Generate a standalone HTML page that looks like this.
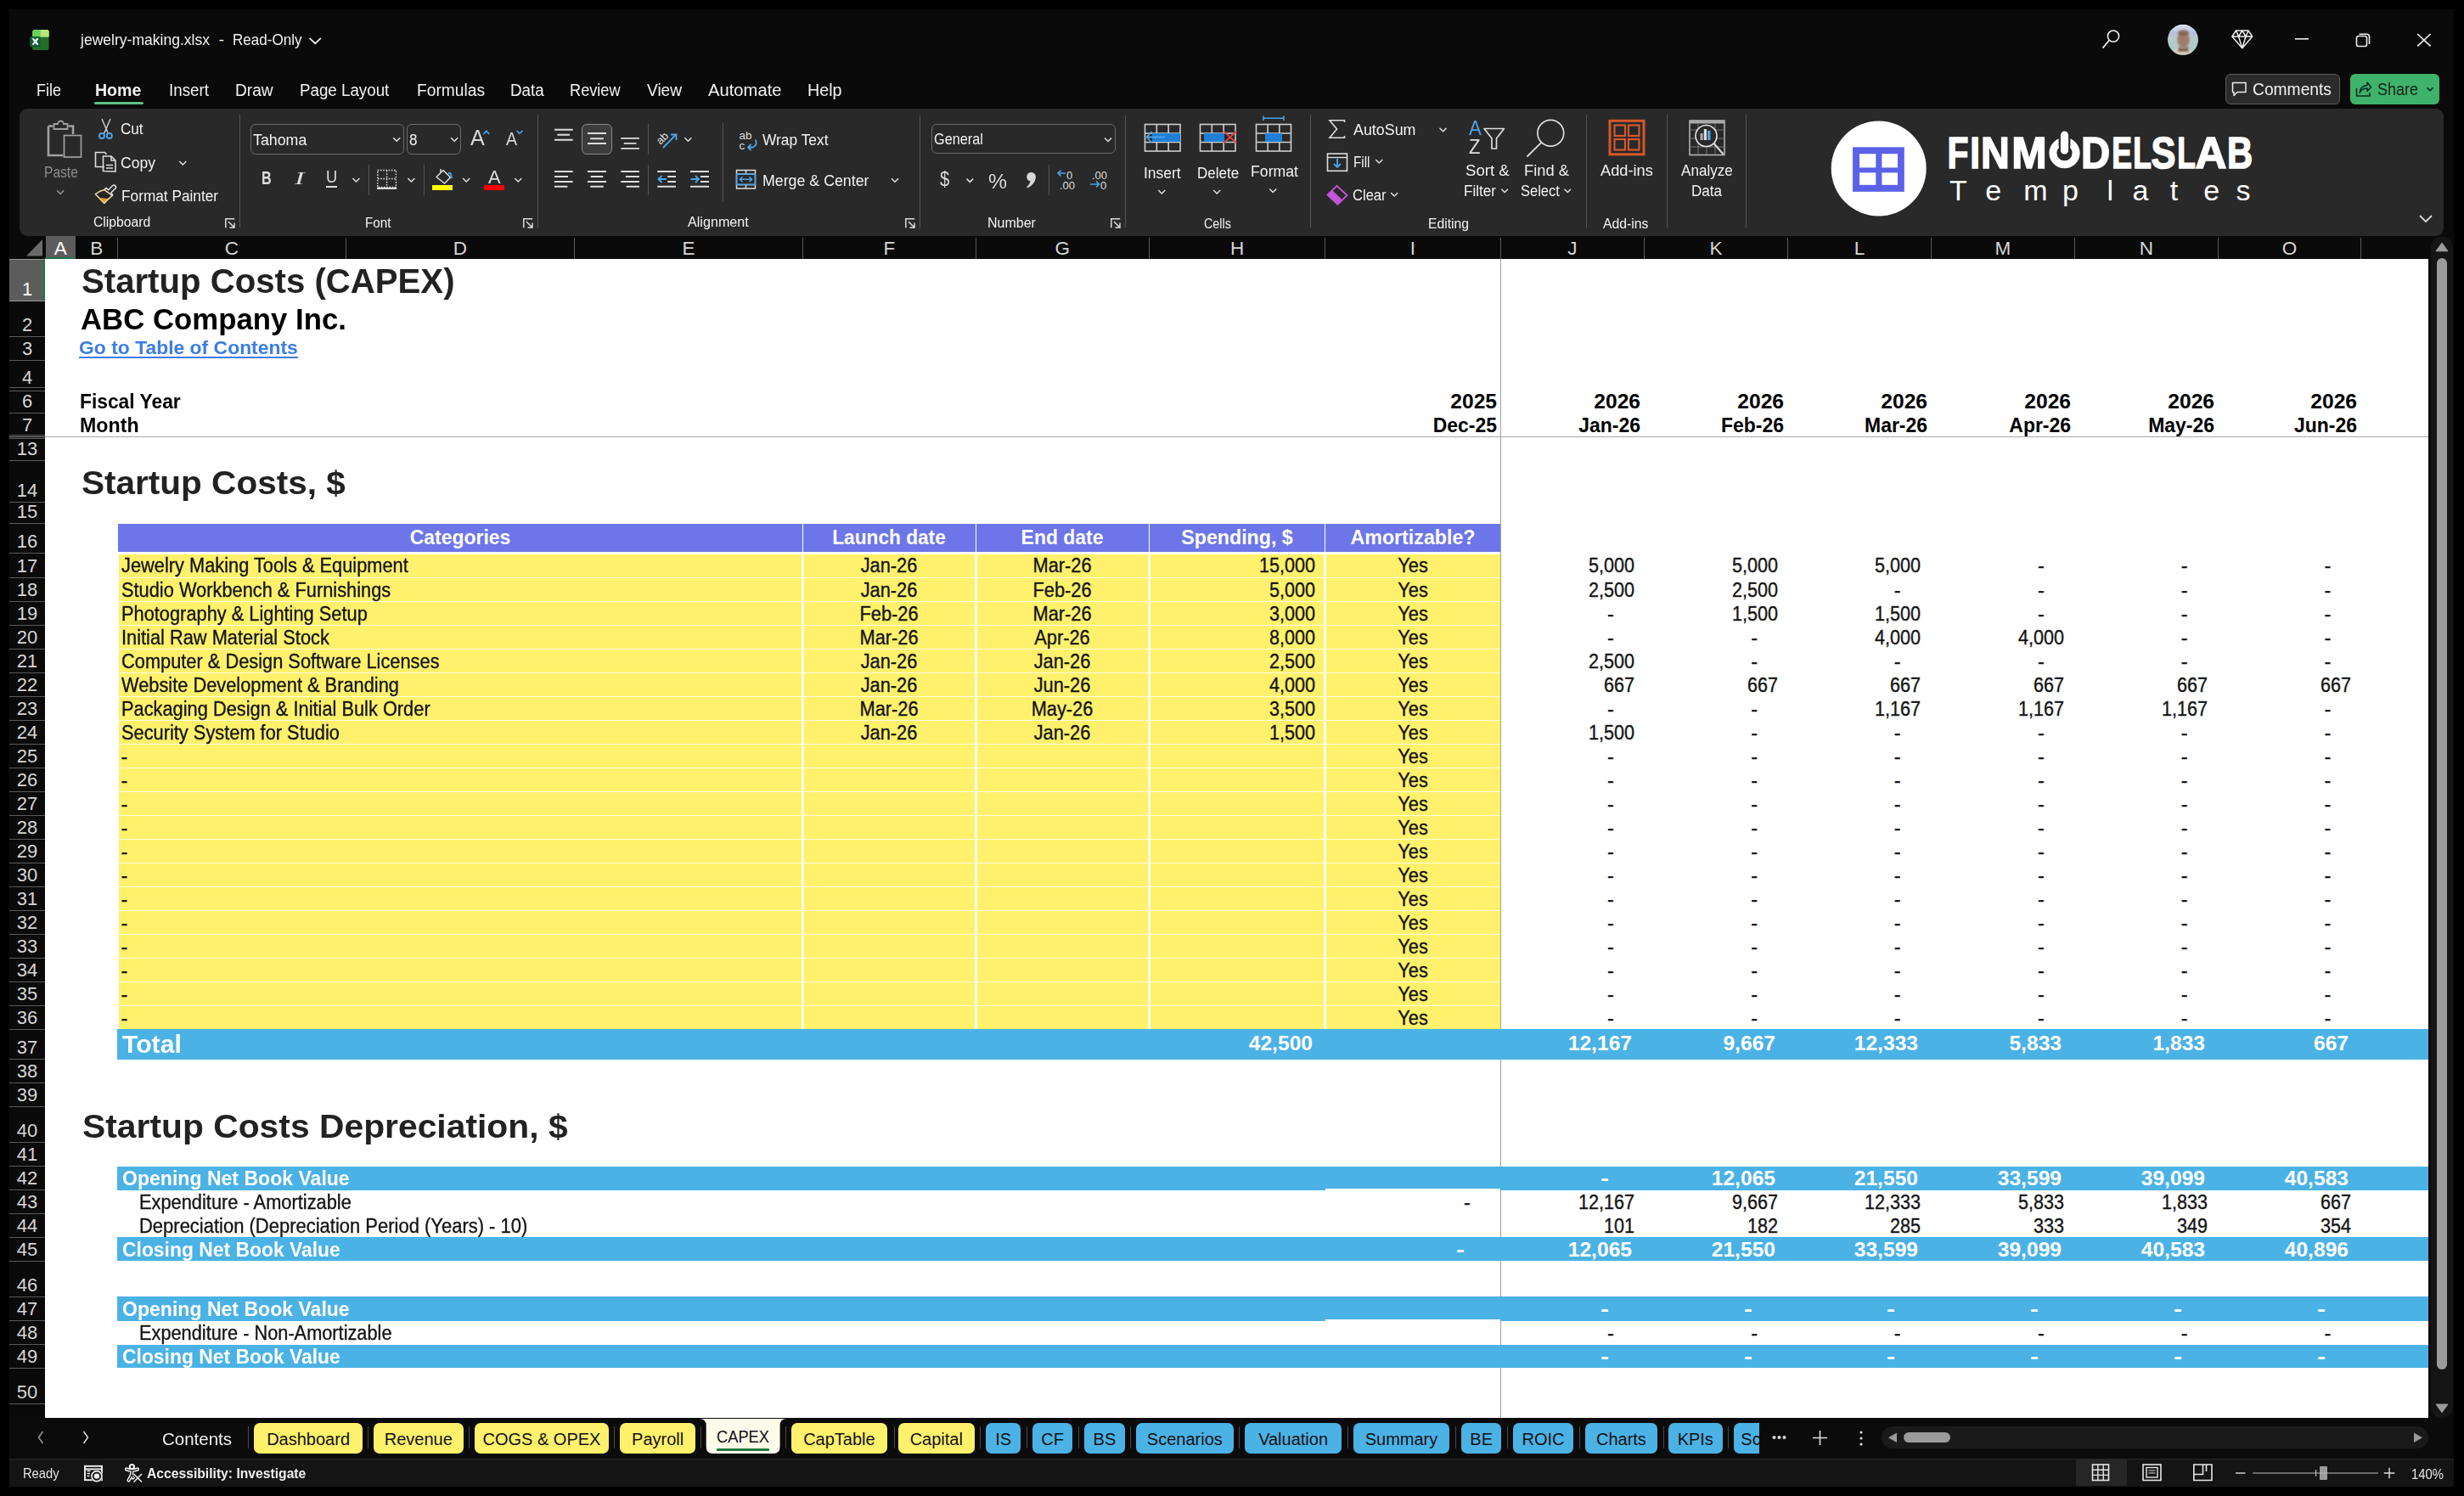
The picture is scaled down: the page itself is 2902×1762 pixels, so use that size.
<!DOCTYPE html><html><head><meta charset="utf-8"><style>
html,body{margin:0;padding:0}
body{width:2902px;height:1762px;background:#000;position:relative;overflow:hidden;font-family:'Liberation Sans',sans-serif}
.a{position:absolute}
.t{position:absolute;white-space:nowrap;line-height:1.117}
.sb{-webkit-text-stroke:0.35px #141414}
svg{position:absolute;overflow:visible}
</style></head><body>
<div class="a" style="left:11px;top:11px;width:2879px;height:1739px;background:#0a0a0a;"></div>
<div class="a" style="left:23px;top:128px;width:2855px;height:150px;background:#292929;border-radius:9px;"></div>
<div class="a" style="left:11px;top:278px;width:2849px;height:27px;background:#0a0a0a;"></div>
<div class="a" style="left:53px;top:305px;width:2807px;height:1365px;background:#fff;"></div>
<div class="a" style="left:11px;top:305px;width:42px;height:1365px;background:#0a0a0a;"></div>
<div class="a" style="left:2863px;top:279px;width:26px;height:1391px;background:#151515;border-radius:12px;"></div>
<div class="a" style="left:11px;top:1670px;width:2879px;height:48px;background:#0b0b0b;"></div>
<div class="a" style="left:11px;top:1718px;width:2879px;height:1px;background:#262626;"></div>
<div class="a" style="left:11px;top:1719px;width:2879px;height:32px;background:#141414;"></div>
<div class="a" style="left:53.5px;top:278px;width:35.5px;height:27px;background:#5c5c5c;"></div>
<div class="a" style="left:53px;top:303px;width:36px;height:2px;background:#1e7145;"></div>
<svg style="left:0;top:0" width="2902" height="1762"><polygon points="31,301.5 50,282 50,301.5" fill="#6a6a6a"/></svg>
<div class="a" style="left:88px;top:280px;width:1px;height:25px;background:#5a5a5a;"></div>
<div class="a" style="left:138px;top:280px;width:1px;height:25px;background:#5a5a5a;"></div>
<div class="a" style="left:407px;top:280px;width:1px;height:25px;background:#5a5a5a;"></div>
<div class="a" style="left:676px;top:280px;width:1px;height:25px;background:#5a5a5a;"></div>
<div class="a" style="left:945px;top:280px;width:1px;height:25px;background:#5a5a5a;"></div>
<div class="a" style="left:1149px;top:280px;width:1px;height:25px;background:#5a5a5a;"></div>
<div class="a" style="left:1353px;top:280px;width:1px;height:25px;background:#5a5a5a;"></div>
<div class="a" style="left:1560px;top:280px;width:1px;height:25px;background:#5a5a5a;"></div>
<div class="a" style="left:1767px;top:280px;width:1px;height:25px;background:#5a5a5a;"></div>
<div class="a" style="left:1936px;top:280px;width:1px;height:25px;background:#5a5a5a;"></div>
<div class="a" style="left:2105px;top:280px;width:1px;height:25px;background:#5a5a5a;"></div>
<div class="a" style="left:2274px;top:280px;width:1px;height:25px;background:#5a5a5a;"></div>
<div class="a" style="left:2443px;top:280px;width:1px;height:25px;background:#5a5a5a;"></div>
<div class="a" style="left:2612px;top:280px;width:1px;height:25px;background:#5a5a5a;"></div>
<div class="a" style="left:2780px;top:280px;width:1px;height:25px;background:#5a5a5a;"></div>
<div class="t" style="left:71.25px;top:279.8px;font-size:22.5px;font-weight:400;color:#ffffff;transform:translateX(-50%) scaleX(1.0);transform-origin:50% 0;">A</div>
<div class="t" style="left:113.75px;top:279.8px;font-size:22.5px;font-weight:400;color:#d6d6d6;transform:translateX(-50%) scaleX(1.0);transform-origin:50% 0;">B</div>
<div class="t" style="left:272.9px;top:279.8px;font-size:22.5px;font-weight:400;color:#d6d6d6;transform:translateX(-50%) scaleX(1.0);transform-origin:50% 0;">C</div>
<div class="t" style="left:541.9px;top:279.8px;font-size:22.5px;font-weight:400;color:#d6d6d6;transform:translateX(-50%) scaleX(1.0);transform-origin:50% 0;">D</div>
<div class="t" style="left:811.0px;top:279.8px;font-size:22.5px;font-weight:400;color:#d6d6d6;transform:translateX(-50%) scaleX(1.0);transform-origin:50% 0;">E</div>
<div class="t" style="left:1047.35px;top:279.8px;font-size:22.5px;font-weight:400;color:#d6d6d6;transform:translateX(-50%) scaleX(1.0);transform-origin:50% 0;">F</div>
<div class="t" style="left:1251.35px;top:279.8px;font-size:22.5px;font-weight:400;color:#d6d6d6;transform:translateX(-50%) scaleX(1.0);transform-origin:50% 0;">G</div>
<div class="t" style="left:1457.0px;top:279.8px;font-size:22.5px;font-weight:400;color:#d6d6d6;transform:translateX(-50%) scaleX(1.0);transform-origin:50% 0;">H</div>
<div class="t" style="left:1663.9px;top:279.8px;font-size:22.5px;font-weight:400;color:#d6d6d6;transform:translateX(-50%) scaleX(1.0);transform-origin:50% 0;">I</div>
<div class="t" style="left:1851.9px;top:279.8px;font-size:22.5px;font-weight:400;color:#d6d6d6;transform:translateX(-50%) scaleX(1.0);transform-origin:50% 0;">J</div>
<div class="t" style="left:2021.1px;top:279.8px;font-size:22.5px;font-weight:400;color:#d6d6d6;transform:translateX(-50%) scaleX(1.0);transform-origin:50% 0;">K</div>
<div class="t" style="left:2189.95px;top:279.8px;font-size:22.5px;font-weight:400;color:#d6d6d6;transform:translateX(-50%) scaleX(1.0);transform-origin:50% 0;">L</div>
<div class="t" style="left:2358.8px;top:279.8px;font-size:22.5px;font-weight:400;color:#d6d6d6;transform:translateX(-50%) scaleX(1.0);transform-origin:50% 0;">M</div>
<div class="t" style="left:2527.8px;top:279.8px;font-size:22.5px;font-weight:400;color:#d6d6d6;transform:translateX(-50%) scaleX(1.0);transform-origin:50% 0;">N</div>
<div class="t" style="left:2696.5px;top:279.8px;font-size:22.5px;font-weight:400;color:#d6d6d6;transform:translateX(-50%) scaleX(1.0);transform-origin:50% 0;">O</div>
<div class="a" style="left:11px;top:305.3px;width:42px;height:49.7px;background:#5c5c5c;"></div>
<div class="a" style="left:51px;top:305px;width:2px;height:50px;background:#1e7145;"></div>
<div class="a" style="left:11px;top:354px;width:42px;height:1px;background:#9a9a9a;"></div>
<div class="t" style="left:32px;top:328.7px;font-size:22px;font-weight:400;color:#ffffff;transform:translateX(-50%) scaleX(1.0);transform-origin:50% 0;">1</div>
<div class="a" style="left:11px;top:396px;width:42px;height:1px;background:#5a5a5a;"></div>
<div class="t" style="left:32px;top:370.7px;font-size:22px;font-weight:400;color:#d6d6d6;transform:translateX(-50%) scaleX(1.0);transform-origin:50% 0;">2</div>
<div class="a" style="left:11px;top:424px;width:42px;height:1px;background:#5a5a5a;"></div>
<div class="t" style="left:32px;top:399.1px;font-size:22px;font-weight:400;color:#d6d6d6;transform:translateX(-50%) scaleX(1.0);transform-origin:50% 0;">3</div>
<div class="a" style="left:11px;top:456px;width:42px;height:1px;background:#5a5a5a;"></div>
<div class="t" style="left:32px;top:432.8px;font-size:22px;font-weight:400;color:#d6d6d6;transform:translateX(-50%) scaleX(1.0);transform-origin:50% 0;">4</div>
<div class="a" style="left:11px;top:486px;width:42px;height:1px;background:#5a5a5a;"></div>
<div class="t" style="left:32px;top:460.7px;font-size:22px;font-weight:400;color:#d6d6d6;transform:translateX(-50%) scaleX(1.0);transform-origin:50% 0;">6</div>
<div class="a" style="left:11px;top:512px;width:42px;height:1px;background:#5a5a5a;"></div>
<div class="t" style="left:32px;top:488.9px;font-size:22px;font-weight:400;color:#d6d6d6;transform:translateX(-50%) scaleX(1.0);transform-origin:50% 0;">7</div>
<div class="a" style="left:11px;top:542px;width:42px;height:1px;background:#5a5a5a;"></div>
<div class="t" style="left:32px;top:517.3px;font-size:22px;font-weight:400;color:#d6d6d6;transform:translateX(-50%) scaleX(1.0);transform-origin:50% 0;">13</div>
<div class="a" style="left:11px;top:591px;width:42px;height:1px;background:#5a5a5a;"></div>
<div class="t" style="left:32px;top:565.9px;font-size:22px;font-weight:400;color:#d6d6d6;transform:translateX(-50%) scaleX(1.0);transform-origin:50% 0;">14</div>
<div class="a" style="left:11px;top:616px;width:42px;height:1px;background:#5a5a5a;"></div>
<div class="t" style="left:32px;top:591.2px;font-size:22px;font-weight:400;color:#d6d6d6;transform:translateX(-50%) scaleX(1.0);transform-origin:50% 0;">15</div>
<div class="a" style="left:11px;top:651px;width:42px;height:1px;background:#5a5a5a;"></div>
<div class="t" style="left:32px;top:626.2px;font-size:22px;font-weight:400;color:#d6d6d6;transform:translateX(-50%) scaleX(1.0);transform-origin:50% 0;">16</div>
<div class="a" style="left:11px;top:680px;width:42px;height:1px;background:#5a5a5a;"></div>
<div class="t" style="left:32px;top:655.1px;font-size:22px;font-weight:400;color:#d6d6d6;transform:translateX(-50%) scaleX(1.0);transform-origin:50% 0;">17</div>
<div class="a" style="left:11px;top:708px;width:42px;height:1px;background:#5a5a5a;"></div>
<div class="t" style="left:32px;top:683.1px;font-size:22px;font-weight:400;color:#d6d6d6;transform:translateX(-50%) scaleX(1.0);transform-origin:50% 0;">18</div>
<div class="a" style="left:11px;top:736px;width:42px;height:1px;background:#5a5a5a;"></div>
<div class="t" style="left:32px;top:711.1px;font-size:22px;font-weight:400;color:#d6d6d6;transform:translateX(-50%) scaleX(1.0);transform-origin:50% 0;">19</div>
<div class="a" style="left:11px;top:764px;width:42px;height:1px;background:#5a5a5a;"></div>
<div class="t" style="left:32px;top:739.1px;font-size:22px;font-weight:400;color:#d6d6d6;transform:translateX(-50%) scaleX(1.0);transform-origin:50% 0;">20</div>
<div class="a" style="left:11px;top:792px;width:42px;height:1px;background:#5a5a5a;"></div>
<div class="t" style="left:32px;top:767.1px;font-size:22px;font-weight:400;color:#d6d6d6;transform:translateX(-50%) scaleX(1.0);transform-origin:50% 0;">21</div>
<div class="a" style="left:11px;top:820px;width:42px;height:1px;background:#5a5a5a;"></div>
<div class="t" style="left:32px;top:795.1px;font-size:22px;font-weight:400;color:#d6d6d6;transform:translateX(-50%) scaleX(1.0);transform-origin:50% 0;">22</div>
<div class="a" style="left:11px;top:848px;width:42px;height:1px;background:#5a5a5a;"></div>
<div class="t" style="left:32px;top:823.1px;font-size:22px;font-weight:400;color:#d6d6d6;transform:translateX(-50%) scaleX(1.0);transform-origin:50% 0;">23</div>
<div class="a" style="left:11px;top:876px;width:42px;height:1px;background:#5a5a5a;"></div>
<div class="t" style="left:32px;top:851.0px;font-size:22px;font-weight:400;color:#d6d6d6;transform:translateX(-50%) scaleX(1.0);transform-origin:50% 0;">24</div>
<div class="a" style="left:11px;top:904px;width:42px;height:1px;background:#5a5a5a;"></div>
<div class="t" style="left:32px;top:879.0px;font-size:22px;font-weight:400;color:#d6d6d6;transform:translateX(-50%) scaleX(1.0);transform-origin:50% 0;">25</div>
<div class="a" style="left:11px;top:932px;width:42px;height:1px;background:#5a5a5a;"></div>
<div class="t" style="left:32px;top:907.0px;font-size:22px;font-weight:400;color:#d6d6d6;transform:translateX(-50%) scaleX(1.0);transform-origin:50% 0;">26</div>
<div class="a" style="left:11px;top:960px;width:42px;height:1px;background:#5a5a5a;"></div>
<div class="t" style="left:32px;top:935.0px;font-size:22px;font-weight:400;color:#d6d6d6;transform:translateX(-50%) scaleX(1.0);transform-origin:50% 0;">27</div>
<div class="a" style="left:11px;top:988px;width:42px;height:1px;background:#5a5a5a;"></div>
<div class="t" style="left:32px;top:963.0px;font-size:22px;font-weight:400;color:#d6d6d6;transform:translateX(-50%) scaleX(1.0);transform-origin:50% 0;">28</div>
<div class="a" style="left:11px;top:1016px;width:42px;height:1px;background:#5a5a5a;"></div>
<div class="t" style="left:32px;top:991.0px;font-size:22px;font-weight:400;color:#d6d6d6;transform:translateX(-50%) scaleX(1.0);transform-origin:50% 0;">29</div>
<div class="a" style="left:11px;top:1044px;width:42px;height:1px;background:#5a5a5a;"></div>
<div class="t" style="left:32px;top:1019.0px;font-size:22px;font-weight:400;color:#d6d6d6;transform:translateX(-50%) scaleX(1.0);transform-origin:50% 0;">30</div>
<div class="a" style="left:11px;top:1072px;width:42px;height:1px;background:#5a5a5a;"></div>
<div class="t" style="left:32px;top:1047.0px;font-size:22px;font-weight:400;color:#d6d6d6;transform:translateX(-50%) scaleX(1.0);transform-origin:50% 0;">31</div>
<div class="a" style="left:11px;top:1100px;width:42px;height:1px;background:#5a5a5a;"></div>
<div class="t" style="left:32px;top:1075.0px;font-size:22px;font-weight:400;color:#d6d6d6;transform:translateX(-50%) scaleX(1.0);transform-origin:50% 0;">32</div>
<div class="a" style="left:11px;top:1128px;width:42px;height:1px;background:#5a5a5a;"></div>
<div class="t" style="left:32px;top:1103.0px;font-size:22px;font-weight:400;color:#d6d6d6;transform:translateX(-50%) scaleX(1.0);transform-origin:50% 0;">33</div>
<div class="a" style="left:11px;top:1156px;width:42px;height:1px;background:#5a5a5a;"></div>
<div class="t" style="left:32px;top:1131.0px;font-size:22px;font-weight:400;color:#d6d6d6;transform:translateX(-50%) scaleX(1.0);transform-origin:50% 0;">34</div>
<div class="a" style="left:11px;top:1184px;width:42px;height:1px;background:#5a5a5a;"></div>
<div class="t" style="left:32px;top:1159.0px;font-size:22px;font-weight:400;color:#d6d6d6;transform:translateX(-50%) scaleX(1.0);transform-origin:50% 0;">35</div>
<div class="a" style="left:11px;top:1212px;width:42px;height:1px;background:#5a5a5a;"></div>
<div class="t" style="left:32px;top:1187.0px;font-size:22px;font-weight:400;color:#d6d6d6;transform:translateX(-50%) scaleX(1.0);transform-origin:50% 0;">36</div>
<div class="a" style="left:11px;top:1247px;width:42px;height:1px;background:#5a5a5a;"></div>
<div class="t" style="left:32px;top:1221.9px;font-size:22px;font-weight:400;color:#d6d6d6;transform:translateX(-50%) scaleX(1.0);transform-origin:50% 0;">37</div>
<div class="a" style="left:11px;top:1275px;width:42px;height:1px;background:#5a5a5a;"></div>
<div class="t" style="left:32px;top:1249.8px;font-size:22px;font-weight:400;color:#d6d6d6;transform:translateX(-50%) scaleX(1.0);transform-origin:50% 0;">38</div>
<div class="a" style="left:11px;top:1303px;width:42px;height:1px;background:#5a5a5a;"></div>
<div class="t" style="left:32px;top:1277.9px;font-size:22px;font-weight:400;color:#d6d6d6;transform:translateX(-50%) scaleX(1.0);transform-origin:50% 0;">39</div>
<div class="a" style="left:11px;top:1345px;width:42px;height:1px;background:#5a5a5a;"></div>
<div class="t" style="left:32px;top:1319.9px;font-size:22px;font-weight:400;color:#d6d6d6;transform:translateX(-50%) scaleX(1.0);transform-origin:50% 0;">40</div>
<div class="a" style="left:11px;top:1373px;width:42px;height:1px;background:#5a5a5a;"></div>
<div class="t" style="left:32px;top:1348.4px;font-size:22px;font-weight:400;color:#d6d6d6;transform:translateX(-50%) scaleX(1.0);transform-origin:50% 0;">41</div>
<div class="a" style="left:11px;top:1401px;width:42px;height:1px;background:#5a5a5a;"></div>
<div class="t" style="left:32px;top:1376.3px;font-size:22px;font-weight:400;color:#d6d6d6;transform:translateX(-50%) scaleX(1.0);transform-origin:50% 0;">42</div>
<div class="a" style="left:11px;top:1429px;width:42px;height:1px;background:#5a5a5a;"></div>
<div class="t" style="left:32px;top:1404.2px;font-size:22px;font-weight:400;color:#d6d6d6;transform:translateX(-50%) scaleX(1.0);transform-origin:50% 0;">43</div>
<div class="a" style="left:11px;top:1457px;width:42px;height:1px;background:#5a5a5a;"></div>
<div class="t" style="left:32px;top:1432.1px;font-size:22px;font-weight:400;color:#d6d6d6;transform:translateX(-50%) scaleX(1.0);transform-origin:50% 0;">44</div>
<div class="a" style="left:11px;top:1485px;width:42px;height:1px;background:#5a5a5a;"></div>
<div class="t" style="left:32px;top:1460.1px;font-size:22px;font-weight:400;color:#d6d6d6;transform:translateX(-50%) scaleX(1.0);transform-origin:50% 0;">45</div>
<div class="a" style="left:11px;top:1527px;width:42px;height:1px;background:#5a5a5a;"></div>
<div class="t" style="left:32px;top:1501.9px;font-size:22px;font-weight:400;color:#d6d6d6;transform:translateX(-50%) scaleX(1.0);transform-origin:50% 0;">46</div>
<div class="a" style="left:11px;top:1555px;width:42px;height:1px;background:#5a5a5a;"></div>
<div class="t" style="left:32px;top:1530.3px;font-size:22px;font-weight:400;color:#d6d6d6;transform:translateX(-50%) scaleX(1.0);transform-origin:50% 0;">47</div>
<div class="a" style="left:11px;top:1583px;width:42px;height:1px;background:#5a5a5a;"></div>
<div class="t" style="left:32px;top:1558.3px;font-size:22px;font-weight:400;color:#d6d6d6;transform:translateX(-50%) scaleX(1.0);transform-origin:50% 0;">48</div>
<div class="a" style="left:11px;top:1611px;width:42px;height:1px;background:#5a5a5a;"></div>
<div class="t" style="left:32px;top:1586.2px;font-size:22px;font-weight:400;color:#d6d6d6;transform:translateX(-50%) scaleX(1.0);transform-origin:50% 0;">49</div>
<div class="a" style="left:11px;top:1653px;width:42px;height:1px;background:#5a5a5a;"></div>
<div class="t" style="left:32px;top:1628.1px;font-size:22px;font-weight:400;color:#d6d6d6;transform:translateX(-50%) scaleX(1.0);transform-origin:50% 0;">50</div>
<div class="a" style="left:11px;top:456px;width:42px;height:1px;background:#5a5a5a;"></div>
<div class="a" style="left:11px;top:460px;width:42px;height:1px;background:#5a5a5a;"></div>
<div class="a" style="left:11px;top:512px;width:42px;height:1px;background:#5a5a5a;"></div>
<div class="a" style="left:11px;top:514px;width:42px;height:1.3px;background:#8a8a8a;"></div>
<div class="a" style="left:11px;top:516px;width:42px;height:1px;background:#5a5a5a;"></div>
<div class="a" style="left:11px;top:1653px;width:42px;height:1px;background:#5a5a5a;"></div>
<div class="a" style="left:11px;top:304.5px;width:42px;height:1px;background:#9a9a9a;"></div>
<div class="a" style="left:53px;top:513.8px;width:2807px;height:1.4px;background:#a8a8a8;"></div>
<div class="a" style="left:1767px;top:305px;width:1.2px;height:1365px;background:#a0a0a0;"></div>
<div class="t" style="left:96px;top:308.9px;font-size:41px;font-weight:700;color:#222;transform:scaleX(0.9794);transform-origin:0 0;">Startup Costs (CAPEX)</div>
<div class="t" style="left:95px;top:357.3px;font-size:35.4px;font-weight:700;color:#000;transform:scaleX(0.9825);transform-origin:0 0;">ABC Company Inc.</div>
<div class="t" style="left:93px;top:398.1px;font-size:21.7px;font-weight:700;color:#3b7de6;transform:scaleX(1.056);transform-origin:0 0;">Go to Table of Contents</div>
<div class="a" style="left:93px;top:420.2px;width:258px;height:2px;background:#3b7de6;"></div>
<div class="t" style="left:93.75px;top:459.6px;font-size:24px;font-weight:700;color:#000;transform:scaleX(0.95);transform-origin:0 0;">Fiscal Year</div>
<div class="t" style="left:93.75px;top:487.6px;font-size:24px;font-weight:700;color:#000;transform:scaleX(0.9671);transform-origin:0 0;">Month</div>
<div class="t" style="left:1762.7px;top:459.8px;font-size:24px;font-weight:700;color:#000;transform:translateX(-100%) scaleX(1.025);transform-origin:100% 0;">2025</div>
<div class="t" style="left:1762.7px;top:487.6px;font-size:24px;font-weight:700;color:#000;transform:translateX(-100%) scaleX(0.956);transform-origin:100% 0;">Dec-25</div>
<div class="t" style="left:1931.9px;top:459.8px;font-size:24px;font-weight:700;color:#000;transform:translateX(-100%) scaleX(1.025);transform-origin:100% 0;">2026</div>
<div class="t" style="left:1931.9px;top:487.6px;font-size:24px;font-weight:700;color:#000;transform:translateX(-100%) scaleX(0.956);transform-origin:100% 0;">Jan-26</div>
<div class="t" style="left:2101.1px;top:459.8px;font-size:24px;font-weight:700;color:#000;transform:translateX(-100%) scaleX(1.025);transform-origin:100% 0;">2026</div>
<div class="t" style="left:2101.1px;top:487.6px;font-size:24px;font-weight:700;color:#000;transform:translateX(-100%) scaleX(0.956);transform-origin:100% 0;">Feb-26</div>
<div class="t" style="left:2269.6px;top:459.8px;font-size:24px;font-weight:700;color:#000;transform:translateX(-100%) scaleX(1.025);transform-origin:100% 0;">2026</div>
<div class="t" style="left:2269.6px;top:487.6px;font-size:24px;font-weight:700;color:#000;transform:translateX(-100%) scaleX(0.956);transform-origin:100% 0;">Mar-26</div>
<div class="t" style="left:2438.8px;top:459.8px;font-size:24px;font-weight:700;color:#000;transform:translateX(-100%) scaleX(1.025);transform-origin:100% 0;">2026</div>
<div class="t" style="left:2438.8px;top:487.6px;font-size:24px;font-weight:700;color:#000;transform:translateX(-100%) scaleX(0.956);transform-origin:100% 0;">Apr-26</div>
<div class="t" style="left:2607.6px;top:459.8px;font-size:24px;font-weight:700;color:#000;transform:translateX(-100%) scaleX(1.025);transform-origin:100% 0;">2026</div>
<div class="t" style="left:2607.6px;top:487.6px;font-size:24px;font-weight:700;color:#000;transform:translateX(-100%) scaleX(0.956);transform-origin:100% 0;">May-26</div>
<div class="t" style="left:2776.2000000000003px;top:459.8px;font-size:24px;font-weight:700;color:#000;transform:translateX(-100%) scaleX(1.025);transform-origin:100% 0;">2026</div>
<div class="t" style="left:2776.2000000000003px;top:487.6px;font-size:24px;font-weight:700;color:#000;transform:translateX(-100%) scaleX(0.956);transform-origin:100% 0;">Jun-26</div>
<div class="t" style="left:96px;top:545.8px;font-size:39.5px;font-weight:700;color:#222;transform:scaleX(1.0261);transform-origin:0 0;">Startup Costs, $</div>
<div class="a" style="left:138.5px;top:617px;width:1628.8px;height:33px;background:#6d76e8;"></div>
<div class="a" style="left:944.8px;top:617px;width:1.4px;height:33px;background:#fff;"></div>
<div class="a" style="left:1148.5px;top:617px;width:1.4px;height:33px;background:#fff;"></div>
<div class="a" style="left:1352.8px;top:617px;width:1.4px;height:33px;background:#fff;"></div>
<div class="a" style="left:1559.8px;top:617px;width:1.4px;height:33px;background:#fff;"></div>
<div class="t" style="left:542px;top:620.3px;font-size:24px;font-weight:700;color:#fff;transform:translateX(-50%) scaleX(0.9569);transform-origin:50% 0;">Categories</div>
<div class="t" style="left:1047.35px;top:620.3px;font-size:24px;font-weight:700;color:#fff;transform:translateX(-50%) scaleX(0.9451);transform-origin:50% 0;">Launch date</div>
<div class="t" style="left:1251.35px;top:620.3px;font-size:24px;font-weight:700;color:#fff;transform:translateX(-50%) scaleX(0.9552);transform-origin:50% 0;">End date</div>
<div class="t" style="left:1457.0px;top:620.3px;font-size:24px;font-weight:700;color:#fff;transform:translateX(-50%) scaleX(0.9668);transform-origin:50% 0;">Spending, $</div>
<div class="t" style="left:1663.9px;top:620.3px;font-size:24px;font-weight:700;color:#fff;transform:translateX(-50%) scaleX(0.967);transform-origin:50% 0;">Amortizable?</div>
<div class="a" style="left:140px;top:652.9px;width:1627px;height:559.3859999999999px;background:#fff16b;"></div>
<div class="a" style="left:140px;top:679.8px;width:1627px;height:1.3px;background:#fffbe0;"></div>
<div class="a" style="left:140px;top:707.794px;width:1627px;height:1.3px;background:#fffbe0;"></div>
<div class="a" style="left:140px;top:735.788px;width:1627px;height:1.3px;background:#fffbe0;"></div>
<div class="a" style="left:140px;top:763.782px;width:1627px;height:1.3px;background:#fffbe0;"></div>
<div class="a" style="left:140px;top:791.7760000000001px;width:1627px;height:1.3px;background:#fffbe0;"></div>
<div class="a" style="left:140px;top:819.7700000000001px;width:1627px;height:1.3px;background:#fffbe0;"></div>
<div class="a" style="left:140px;top:847.7640000000001px;width:1627px;height:1.3px;background:#fffbe0;"></div>
<div class="a" style="left:140px;top:875.7580000000002px;width:1627px;height:1.3px;background:#fffbe0;"></div>
<div class="a" style="left:140px;top:903.7520000000002px;width:1627px;height:1.3px;background:#fffbe0;"></div>
<div class="a" style="left:140px;top:931.7460000000002px;width:1627px;height:1.3px;background:#fffbe0;"></div>
<div class="a" style="left:140px;top:959.7400000000002px;width:1627px;height:1.3px;background:#fffbe0;"></div>
<div class="a" style="left:140px;top:987.7340000000003px;width:1627px;height:1.3px;background:#fffbe0;"></div>
<div class="a" style="left:140px;top:1015.7280000000003px;width:1627px;height:1.3px;background:#fffbe0;"></div>
<div class="a" style="left:140px;top:1043.7220000000004px;width:1627px;height:1.3px;background:#fffbe0;"></div>
<div class="a" style="left:140px;top:1071.7160000000003px;width:1627px;height:1.3px;background:#fffbe0;"></div>
<div class="a" style="left:140px;top:1099.7100000000003px;width:1627px;height:1.3px;background:#fffbe0;"></div>
<div class="a" style="left:140px;top:1127.7040000000002px;width:1627px;height:1.3px;background:#fffbe0;"></div>
<div class="a" style="left:140px;top:1155.698px;width:1627px;height:1.3px;background:#fffbe0;"></div>
<div class="a" style="left:140px;top:1183.692px;width:1627px;height:1.3px;background:#fffbe0;"></div>
<div class="a" style="left:944.0px;top:651.4px;width:3px;height:560.8859999999999px;background:#fffdf0;"></div>
<div class="a" style="left:1147.7px;top:651.4px;width:3px;height:560.8859999999999px;background:#fffdf0;"></div>
<div class="a" style="left:1352.0px;top:651.4px;width:3px;height:560.8859999999999px;background:#fffdf0;"></div>
<div class="a" style="left:1559.0px;top:651.4px;width:3px;height:560.8859999999999px;background:#fffdf0;"></div>
<div class="t sb" style="left:142.5px;top:652.6px;font-size:23.5px;font-weight:400;color:#141414;transform:scaleX(0.928);transform-origin:0 0;">Jewelry Making Tools &amp; Equipment</div>
<div class="t sb" style="left:1047.35px;top:652.6px;font-size:23.5px;font-weight:400;color:#141414;transform:translateX(-50%) scaleX(0.928);transform-origin:50% 0;">Jan-26</div>
<div class="t sb" style="left:1251.35px;top:652.6px;font-size:23.5px;font-weight:400;color:#141414;transform:translateX(-50%) scaleX(0.928);transform-origin:50% 0;">Mar-26</div>
<div class="t sb" style="left:1548.5px;top:652.6px;font-size:23.5px;font-weight:400;color:#141414;transform:translateX(-100%) scaleX(0.918);transform-origin:100% 0;">15,000</div>
<div class="t sb" style="left:1663.9px;top:652.6px;font-size:23.5px;font-weight:400;color:#141414;transform:translateX(-50%) scaleX(0.928);transform-origin:50% 0;">Yes</div>
<div class="t sb" style="left:1924.5px;top:652.6px;font-size:23.5px;font-weight:400;color:#141414;transform:translateX(-100%) scaleX(0.918);transform-origin:100% 0;">5,000</div>
<div class="t sb" style="left:2093.7px;top:652.6px;font-size:23.5px;font-weight:400;color:#141414;transform:translateX(-100%) scaleX(0.918);transform-origin:100% 0;">5,000</div>
<div class="t sb" style="left:2262.2px;top:652.6px;font-size:23.5px;font-weight:400;color:#141414;transform:translateX(-100%) scaleX(0.918);transform-origin:100% 0;">5,000</div>
<div class="t sb" style="left:2403.9px;top:652.6px;font-size:23.5px;font-weight:400;color:#141414;transform:translateX(-50%) scaleX(1.0);transform-origin:50% 0;">-</div>
<div class="t sb" style="left:2572.7px;top:652.6px;font-size:23.5px;font-weight:400;color:#141414;transform:translateX(-50%) scaleX(1.0);transform-origin:50% 0;">-</div>
<div class="t sb" style="left:2741.3px;top:652.6px;font-size:23.5px;font-weight:400;color:#141414;transform:translateX(-50%) scaleX(1.0);transform-origin:50% 0;">-</div>
<div class="t sb" style="left:142.5px;top:681.7px;font-size:23.5px;font-weight:400;color:#141414;transform:scaleX(0.928);transform-origin:0 0;">Studio Workbench &amp; Furnishings</div>
<div class="t sb" style="left:1047.35px;top:681.7px;font-size:23.5px;font-weight:400;color:#141414;transform:translateX(-50%) scaleX(0.928);transform-origin:50% 0;">Jan-26</div>
<div class="t sb" style="left:1251.35px;top:681.7px;font-size:23.5px;font-weight:400;color:#141414;transform:translateX(-50%) scaleX(0.928);transform-origin:50% 0;">Feb-26</div>
<div class="t sb" style="left:1548.5px;top:681.7px;font-size:23.5px;font-weight:400;color:#141414;transform:translateX(-100%) scaleX(0.918);transform-origin:100% 0;">5,000</div>
<div class="t sb" style="left:1663.9px;top:681.7px;font-size:23.5px;font-weight:400;color:#141414;transform:translateX(-50%) scaleX(0.928);transform-origin:50% 0;">Yes</div>
<div class="t sb" style="left:1924.5px;top:681.7px;font-size:23.5px;font-weight:400;color:#141414;transform:translateX(-100%) scaleX(0.918);transform-origin:100% 0;">2,500</div>
<div class="t sb" style="left:2093.7px;top:681.7px;font-size:23.5px;font-weight:400;color:#141414;transform:translateX(-100%) scaleX(0.918);transform-origin:100% 0;">2,500</div>
<div class="t sb" style="left:2234.7px;top:681.7px;font-size:23.5px;font-weight:400;color:#141414;transform:translateX(-50%) scaleX(1.0);transform-origin:50% 0;">-</div>
<div class="t sb" style="left:2403.9px;top:681.7px;font-size:23.5px;font-weight:400;color:#141414;transform:translateX(-50%) scaleX(1.0);transform-origin:50% 0;">-</div>
<div class="t sb" style="left:2572.7px;top:681.7px;font-size:23.5px;font-weight:400;color:#141414;transform:translateX(-50%) scaleX(1.0);transform-origin:50% 0;">-</div>
<div class="t sb" style="left:2741.3px;top:681.7px;font-size:23.5px;font-weight:400;color:#141414;transform:translateX(-50%) scaleX(1.0);transform-origin:50% 0;">-</div>
<div class="t sb" style="left:142.5px;top:709.7px;font-size:23.5px;font-weight:400;color:#141414;transform:scaleX(0.928);transform-origin:0 0;">Photography &amp; Lighting Setup</div>
<div class="t sb" style="left:1047.35px;top:709.7px;font-size:23.5px;font-weight:400;color:#141414;transform:translateX(-50%) scaleX(0.928);transform-origin:50% 0;">Feb-26</div>
<div class="t sb" style="left:1251.35px;top:709.7px;font-size:23.5px;font-weight:400;color:#141414;transform:translateX(-50%) scaleX(0.928);transform-origin:50% 0;">Mar-26</div>
<div class="t sb" style="left:1548.5px;top:709.7px;font-size:23.5px;font-weight:400;color:#141414;transform:translateX(-100%) scaleX(0.918);transform-origin:100% 0;">3,000</div>
<div class="t sb" style="left:1663.9px;top:709.7px;font-size:23.5px;font-weight:400;color:#141414;transform:translateX(-50%) scaleX(0.928);transform-origin:50% 0;">Yes</div>
<div class="t sb" style="left:1897.0px;top:709.7px;font-size:23.5px;font-weight:400;color:#141414;transform:translateX(-50%) scaleX(1.0);transform-origin:50% 0;">-</div>
<div class="t sb" style="left:2093.7px;top:709.7px;font-size:23.5px;font-weight:400;color:#141414;transform:translateX(-100%) scaleX(0.918);transform-origin:100% 0;">1,500</div>
<div class="t sb" style="left:2262.2px;top:709.7px;font-size:23.5px;font-weight:400;color:#141414;transform:translateX(-100%) scaleX(0.918);transform-origin:100% 0;">1,500</div>
<div class="t sb" style="left:2403.9px;top:709.7px;font-size:23.5px;font-weight:400;color:#141414;transform:translateX(-50%) scaleX(1.0);transform-origin:50% 0;">-</div>
<div class="t sb" style="left:2572.7px;top:709.7px;font-size:23.5px;font-weight:400;color:#141414;transform:translateX(-50%) scaleX(1.0);transform-origin:50% 0;">-</div>
<div class="t sb" style="left:2741.3px;top:709.7px;font-size:23.5px;font-weight:400;color:#141414;transform:translateX(-50%) scaleX(1.0);transform-origin:50% 0;">-</div>
<div class="t sb" style="left:142.5px;top:737.7px;font-size:23.5px;font-weight:400;color:#141414;transform:scaleX(0.928);transform-origin:0 0;">Initial Raw Material Stock</div>
<div class="t sb" style="left:1047.35px;top:737.7px;font-size:23.5px;font-weight:400;color:#141414;transform:translateX(-50%) scaleX(0.928);transform-origin:50% 0;">Mar-26</div>
<div class="t sb" style="left:1251.35px;top:737.7px;font-size:23.5px;font-weight:400;color:#141414;transform:translateX(-50%) scaleX(0.928);transform-origin:50% 0;">Apr-26</div>
<div class="t sb" style="left:1548.5px;top:737.7px;font-size:23.5px;font-weight:400;color:#141414;transform:translateX(-100%) scaleX(0.918);transform-origin:100% 0;">8,000</div>
<div class="t sb" style="left:1663.9px;top:737.7px;font-size:23.5px;font-weight:400;color:#141414;transform:translateX(-50%) scaleX(0.928);transform-origin:50% 0;">Yes</div>
<div class="t sb" style="left:1897.0px;top:737.7px;font-size:23.5px;font-weight:400;color:#141414;transform:translateX(-50%) scaleX(1.0);transform-origin:50% 0;">-</div>
<div class="t sb" style="left:2066.2px;top:737.7px;font-size:23.5px;font-weight:400;color:#141414;transform:translateX(-50%) scaleX(1.0);transform-origin:50% 0;">-</div>
<div class="t sb" style="left:2262.2px;top:737.7px;font-size:23.5px;font-weight:400;color:#141414;transform:translateX(-100%) scaleX(0.918);transform-origin:100% 0;">4,000</div>
<div class="t sb" style="left:2431.4px;top:737.7px;font-size:23.5px;font-weight:400;color:#141414;transform:translateX(-100%) scaleX(0.918);transform-origin:100% 0;">4,000</div>
<div class="t sb" style="left:2572.7px;top:737.7px;font-size:23.5px;font-weight:400;color:#141414;transform:translateX(-50%) scaleX(1.0);transform-origin:50% 0;">-</div>
<div class="t sb" style="left:2741.3px;top:737.7px;font-size:23.5px;font-weight:400;color:#141414;transform:translateX(-50%) scaleX(1.0);transform-origin:50% 0;">-</div>
<div class="t sb" style="left:142.5px;top:765.7px;font-size:23.5px;font-weight:400;color:#141414;transform:scaleX(0.928);transform-origin:0 0;">Computer &amp; Design Software Licenses</div>
<div class="t sb" style="left:1047.35px;top:765.7px;font-size:23.5px;font-weight:400;color:#141414;transform:translateX(-50%) scaleX(0.928);transform-origin:50% 0;">Jan-26</div>
<div class="t sb" style="left:1251.35px;top:765.7px;font-size:23.5px;font-weight:400;color:#141414;transform:translateX(-50%) scaleX(0.928);transform-origin:50% 0;">Jan-26</div>
<div class="t sb" style="left:1548.5px;top:765.7px;font-size:23.5px;font-weight:400;color:#141414;transform:translateX(-100%) scaleX(0.918);transform-origin:100% 0;">2,500</div>
<div class="t sb" style="left:1663.9px;top:765.7px;font-size:23.5px;font-weight:400;color:#141414;transform:translateX(-50%) scaleX(0.928);transform-origin:50% 0;">Yes</div>
<div class="t sb" style="left:1924.5px;top:765.7px;font-size:23.5px;font-weight:400;color:#141414;transform:translateX(-100%) scaleX(0.918);transform-origin:100% 0;">2,500</div>
<div class="t sb" style="left:2066.2px;top:765.7px;font-size:23.5px;font-weight:400;color:#141414;transform:translateX(-50%) scaleX(1.0);transform-origin:50% 0;">-</div>
<div class="t sb" style="left:2234.7px;top:765.7px;font-size:23.5px;font-weight:400;color:#141414;transform:translateX(-50%) scaleX(1.0);transform-origin:50% 0;">-</div>
<div class="t sb" style="left:2403.9px;top:765.7px;font-size:23.5px;font-weight:400;color:#141414;transform:translateX(-50%) scaleX(1.0);transform-origin:50% 0;">-</div>
<div class="t sb" style="left:2572.7px;top:765.7px;font-size:23.5px;font-weight:400;color:#141414;transform:translateX(-50%) scaleX(1.0);transform-origin:50% 0;">-</div>
<div class="t sb" style="left:2741.3px;top:765.7px;font-size:23.5px;font-weight:400;color:#141414;transform:translateX(-50%) scaleX(1.0);transform-origin:50% 0;">-</div>
<div class="t sb" style="left:142.5px;top:793.7px;font-size:23.5px;font-weight:400;color:#141414;transform:scaleX(0.928);transform-origin:0 0;">Website Development &amp; Branding</div>
<div class="t sb" style="left:1047.35px;top:793.7px;font-size:23.5px;font-weight:400;color:#141414;transform:translateX(-50%) scaleX(0.928);transform-origin:50% 0;">Jan-26</div>
<div class="t sb" style="left:1251.35px;top:793.7px;font-size:23.5px;font-weight:400;color:#141414;transform:translateX(-50%) scaleX(0.928);transform-origin:50% 0;">Jun-26</div>
<div class="t sb" style="left:1548.5px;top:793.7px;font-size:23.5px;font-weight:400;color:#141414;transform:translateX(-100%) scaleX(0.918);transform-origin:100% 0;">4,000</div>
<div class="t sb" style="left:1663.9px;top:793.7px;font-size:23.5px;font-weight:400;color:#141414;transform:translateX(-50%) scaleX(0.928);transform-origin:50% 0;">Yes</div>
<div class="t sb" style="left:1924.5px;top:793.7px;font-size:23.5px;font-weight:400;color:#141414;transform:translateX(-100%) scaleX(0.918);transform-origin:100% 0;">667</div>
<div class="t sb" style="left:2093.7px;top:793.7px;font-size:23.5px;font-weight:400;color:#141414;transform:translateX(-100%) scaleX(0.918);transform-origin:100% 0;">667</div>
<div class="t sb" style="left:2262.2px;top:793.7px;font-size:23.5px;font-weight:400;color:#141414;transform:translateX(-100%) scaleX(0.918);transform-origin:100% 0;">667</div>
<div class="t sb" style="left:2431.4px;top:793.7px;font-size:23.5px;font-weight:400;color:#141414;transform:translateX(-100%) scaleX(0.918);transform-origin:100% 0;">667</div>
<div class="t sb" style="left:2600.2px;top:793.7px;font-size:23.5px;font-weight:400;color:#141414;transform:translateX(-100%) scaleX(0.918);transform-origin:100% 0;">667</div>
<div class="t sb" style="left:2768.8px;top:793.7px;font-size:23.5px;font-weight:400;color:#141414;transform:translateX(-100%) scaleX(0.918);transform-origin:100% 0;">667</div>
<div class="t sb" style="left:142.5px;top:821.7px;font-size:23.5px;font-weight:400;color:#141414;transform:scaleX(0.928);transform-origin:0 0;">Packaging Design &amp; Initial Bulk Order</div>
<div class="t sb" style="left:1047.35px;top:821.7px;font-size:23.5px;font-weight:400;color:#141414;transform:translateX(-50%) scaleX(0.928);transform-origin:50% 0;">Mar-26</div>
<div class="t sb" style="left:1251.35px;top:821.7px;font-size:23.5px;font-weight:400;color:#141414;transform:translateX(-50%) scaleX(0.928);transform-origin:50% 0;">May-26</div>
<div class="t sb" style="left:1548.5px;top:821.7px;font-size:23.5px;font-weight:400;color:#141414;transform:translateX(-100%) scaleX(0.918);transform-origin:100% 0;">3,500</div>
<div class="t sb" style="left:1663.9px;top:821.7px;font-size:23.5px;font-weight:400;color:#141414;transform:translateX(-50%) scaleX(0.928);transform-origin:50% 0;">Yes</div>
<div class="t sb" style="left:1897.0px;top:821.7px;font-size:23.5px;font-weight:400;color:#141414;transform:translateX(-50%) scaleX(1.0);transform-origin:50% 0;">-</div>
<div class="t sb" style="left:2066.2px;top:821.7px;font-size:23.5px;font-weight:400;color:#141414;transform:translateX(-50%) scaleX(1.0);transform-origin:50% 0;">-</div>
<div class="t sb" style="left:2262.2px;top:821.7px;font-size:23.5px;font-weight:400;color:#141414;transform:translateX(-100%) scaleX(0.918);transform-origin:100% 0;">1,167</div>
<div class="t sb" style="left:2431.4px;top:821.7px;font-size:23.5px;font-weight:400;color:#141414;transform:translateX(-100%) scaleX(0.918);transform-origin:100% 0;">1,167</div>
<div class="t sb" style="left:2600.2px;top:821.7px;font-size:23.5px;font-weight:400;color:#141414;transform:translateX(-100%) scaleX(0.918);transform-origin:100% 0;">1,167</div>
<div class="t sb" style="left:2741.3px;top:821.7px;font-size:23.5px;font-weight:400;color:#141414;transform:translateX(-50%) scaleX(1.0);transform-origin:50% 0;">-</div>
<div class="t sb" style="left:142.5px;top:849.7px;font-size:23.5px;font-weight:400;color:#141414;transform:scaleX(0.928);transform-origin:0 0;">Security System for Studio</div>
<div class="t sb" style="left:1047.35px;top:849.7px;font-size:23.5px;font-weight:400;color:#141414;transform:translateX(-50%) scaleX(0.928);transform-origin:50% 0;">Jan-26</div>
<div class="t sb" style="left:1251.35px;top:849.7px;font-size:23.5px;font-weight:400;color:#141414;transform:translateX(-50%) scaleX(0.928);transform-origin:50% 0;">Jan-26</div>
<div class="t sb" style="left:1548.5px;top:849.7px;font-size:23.5px;font-weight:400;color:#141414;transform:translateX(-100%) scaleX(0.918);transform-origin:100% 0;">1,500</div>
<div class="t sb" style="left:1663.9px;top:849.7px;font-size:23.5px;font-weight:400;color:#141414;transform:translateX(-50%) scaleX(0.928);transform-origin:50% 0;">Yes</div>
<div class="t sb" style="left:1924.5px;top:849.7px;font-size:23.5px;font-weight:400;color:#141414;transform:translateX(-100%) scaleX(0.918);transform-origin:100% 0;">1,500</div>
<div class="t sb" style="left:2066.2px;top:849.7px;font-size:23.5px;font-weight:400;color:#141414;transform:translateX(-50%) scaleX(1.0);transform-origin:50% 0;">-</div>
<div class="t sb" style="left:2234.7px;top:849.7px;font-size:23.5px;font-weight:400;color:#141414;transform:translateX(-50%) scaleX(1.0);transform-origin:50% 0;">-</div>
<div class="t sb" style="left:2403.9px;top:849.7px;font-size:23.5px;font-weight:400;color:#141414;transform:translateX(-50%) scaleX(1.0);transform-origin:50% 0;">-</div>
<div class="t sb" style="left:2572.7px;top:849.7px;font-size:23.5px;font-weight:400;color:#141414;transform:translateX(-50%) scaleX(1.0);transform-origin:50% 0;">-</div>
<div class="t sb" style="left:2741.3px;top:849.7px;font-size:23.5px;font-weight:400;color:#141414;transform:translateX(-50%) scaleX(1.0);transform-origin:50% 0;">-</div>
<div class="t sb" style="left:142.5px;top:877.7px;font-size:23.5px;font-weight:400;color:#141414;">-</div>
<div class="t sb" style="left:1663.9px;top:877.7px;font-size:23.5px;font-weight:400;color:#141414;transform:translateX(-50%) scaleX(0.928);transform-origin:50% 0;">Yes</div>
<div class="t sb" style="left:1897.0px;top:877.7px;font-size:23.5px;font-weight:400;color:#141414;transform:translateX(-50%) scaleX(1.0);transform-origin:50% 0;">-</div>
<div class="t sb" style="left:2066.2px;top:877.7px;font-size:23.5px;font-weight:400;color:#141414;transform:translateX(-50%) scaleX(1.0);transform-origin:50% 0;">-</div>
<div class="t sb" style="left:2234.7px;top:877.7px;font-size:23.5px;font-weight:400;color:#141414;transform:translateX(-50%) scaleX(1.0);transform-origin:50% 0;">-</div>
<div class="t sb" style="left:2403.9px;top:877.7px;font-size:23.5px;font-weight:400;color:#141414;transform:translateX(-50%) scaleX(1.0);transform-origin:50% 0;">-</div>
<div class="t sb" style="left:2572.7px;top:877.7px;font-size:23.5px;font-weight:400;color:#141414;transform:translateX(-50%) scaleX(1.0);transform-origin:50% 0;">-</div>
<div class="t sb" style="left:2741.3px;top:877.7px;font-size:23.5px;font-weight:400;color:#141414;transform:translateX(-50%) scaleX(1.0);transform-origin:50% 0;">-</div>
<div class="t sb" style="left:142.5px;top:905.7px;font-size:23.5px;font-weight:400;color:#141414;">-</div>
<div class="t sb" style="left:1663.9px;top:905.7px;font-size:23.5px;font-weight:400;color:#141414;transform:translateX(-50%) scaleX(0.928);transform-origin:50% 0;">Yes</div>
<div class="t sb" style="left:1897.0px;top:905.7px;font-size:23.5px;font-weight:400;color:#141414;transform:translateX(-50%) scaleX(1.0);transform-origin:50% 0;">-</div>
<div class="t sb" style="left:2066.2px;top:905.7px;font-size:23.5px;font-weight:400;color:#141414;transform:translateX(-50%) scaleX(1.0);transform-origin:50% 0;">-</div>
<div class="t sb" style="left:2234.7px;top:905.7px;font-size:23.5px;font-weight:400;color:#141414;transform:translateX(-50%) scaleX(1.0);transform-origin:50% 0;">-</div>
<div class="t sb" style="left:2403.9px;top:905.7px;font-size:23.5px;font-weight:400;color:#141414;transform:translateX(-50%) scaleX(1.0);transform-origin:50% 0;">-</div>
<div class="t sb" style="left:2572.7px;top:905.7px;font-size:23.5px;font-weight:400;color:#141414;transform:translateX(-50%) scaleX(1.0);transform-origin:50% 0;">-</div>
<div class="t sb" style="left:2741.3px;top:905.7px;font-size:23.5px;font-weight:400;color:#141414;transform:translateX(-50%) scaleX(1.0);transform-origin:50% 0;">-</div>
<div class="t sb" style="left:142.5px;top:933.7px;font-size:23.5px;font-weight:400;color:#141414;">-</div>
<div class="t sb" style="left:1663.9px;top:933.7px;font-size:23.5px;font-weight:400;color:#141414;transform:translateX(-50%) scaleX(0.928);transform-origin:50% 0;">Yes</div>
<div class="t sb" style="left:1897.0px;top:933.7px;font-size:23.5px;font-weight:400;color:#141414;transform:translateX(-50%) scaleX(1.0);transform-origin:50% 0;">-</div>
<div class="t sb" style="left:2066.2px;top:933.7px;font-size:23.5px;font-weight:400;color:#141414;transform:translateX(-50%) scaleX(1.0);transform-origin:50% 0;">-</div>
<div class="t sb" style="left:2234.7px;top:933.7px;font-size:23.5px;font-weight:400;color:#141414;transform:translateX(-50%) scaleX(1.0);transform-origin:50% 0;">-</div>
<div class="t sb" style="left:2403.9px;top:933.7px;font-size:23.5px;font-weight:400;color:#141414;transform:translateX(-50%) scaleX(1.0);transform-origin:50% 0;">-</div>
<div class="t sb" style="left:2572.7px;top:933.7px;font-size:23.5px;font-weight:400;color:#141414;transform:translateX(-50%) scaleX(1.0);transform-origin:50% 0;">-</div>
<div class="t sb" style="left:2741.3px;top:933.7px;font-size:23.5px;font-weight:400;color:#141414;transform:translateX(-50%) scaleX(1.0);transform-origin:50% 0;">-</div>
<div class="t sb" style="left:142.5px;top:961.7px;font-size:23.5px;font-weight:400;color:#141414;">-</div>
<div class="t sb" style="left:1663.9px;top:961.7px;font-size:23.5px;font-weight:400;color:#141414;transform:translateX(-50%) scaleX(0.928);transform-origin:50% 0;">Yes</div>
<div class="t sb" style="left:1897.0px;top:961.7px;font-size:23.5px;font-weight:400;color:#141414;transform:translateX(-50%) scaleX(1.0);transform-origin:50% 0;">-</div>
<div class="t sb" style="left:2066.2px;top:961.7px;font-size:23.5px;font-weight:400;color:#141414;transform:translateX(-50%) scaleX(1.0);transform-origin:50% 0;">-</div>
<div class="t sb" style="left:2234.7px;top:961.7px;font-size:23.5px;font-weight:400;color:#141414;transform:translateX(-50%) scaleX(1.0);transform-origin:50% 0;">-</div>
<div class="t sb" style="left:2403.9px;top:961.7px;font-size:23.5px;font-weight:400;color:#141414;transform:translateX(-50%) scaleX(1.0);transform-origin:50% 0;">-</div>
<div class="t sb" style="left:2572.7px;top:961.7px;font-size:23.5px;font-weight:400;color:#141414;transform:translateX(-50%) scaleX(1.0);transform-origin:50% 0;">-</div>
<div class="t sb" style="left:2741.3px;top:961.7px;font-size:23.5px;font-weight:400;color:#141414;transform:translateX(-50%) scaleX(1.0);transform-origin:50% 0;">-</div>
<div class="t sb" style="left:142.5px;top:989.7px;font-size:23.5px;font-weight:400;color:#141414;">-</div>
<div class="t sb" style="left:1663.9px;top:989.7px;font-size:23.5px;font-weight:400;color:#141414;transform:translateX(-50%) scaleX(0.928);transform-origin:50% 0;">Yes</div>
<div class="t sb" style="left:1897.0px;top:989.7px;font-size:23.5px;font-weight:400;color:#141414;transform:translateX(-50%) scaleX(1.0);transform-origin:50% 0;">-</div>
<div class="t sb" style="left:2066.2px;top:989.7px;font-size:23.5px;font-weight:400;color:#141414;transform:translateX(-50%) scaleX(1.0);transform-origin:50% 0;">-</div>
<div class="t sb" style="left:2234.7px;top:989.7px;font-size:23.5px;font-weight:400;color:#141414;transform:translateX(-50%) scaleX(1.0);transform-origin:50% 0;">-</div>
<div class="t sb" style="left:2403.9px;top:989.7px;font-size:23.5px;font-weight:400;color:#141414;transform:translateX(-50%) scaleX(1.0);transform-origin:50% 0;">-</div>
<div class="t sb" style="left:2572.7px;top:989.7px;font-size:23.5px;font-weight:400;color:#141414;transform:translateX(-50%) scaleX(1.0);transform-origin:50% 0;">-</div>
<div class="t sb" style="left:2741.3px;top:989.7px;font-size:23.5px;font-weight:400;color:#141414;transform:translateX(-50%) scaleX(1.0);transform-origin:50% 0;">-</div>
<div class="t sb" style="left:142.5px;top:1017.7px;font-size:23.5px;font-weight:400;color:#141414;">-</div>
<div class="t sb" style="left:1663.9px;top:1017.7px;font-size:23.5px;font-weight:400;color:#141414;transform:translateX(-50%) scaleX(0.928);transform-origin:50% 0;">Yes</div>
<div class="t sb" style="left:1897.0px;top:1017.7px;font-size:23.5px;font-weight:400;color:#141414;transform:translateX(-50%) scaleX(1.0);transform-origin:50% 0;">-</div>
<div class="t sb" style="left:2066.2px;top:1017.7px;font-size:23.5px;font-weight:400;color:#141414;transform:translateX(-50%) scaleX(1.0);transform-origin:50% 0;">-</div>
<div class="t sb" style="left:2234.7px;top:1017.7px;font-size:23.5px;font-weight:400;color:#141414;transform:translateX(-50%) scaleX(1.0);transform-origin:50% 0;">-</div>
<div class="t sb" style="left:2403.9px;top:1017.7px;font-size:23.5px;font-weight:400;color:#141414;transform:translateX(-50%) scaleX(1.0);transform-origin:50% 0;">-</div>
<div class="t sb" style="left:2572.7px;top:1017.7px;font-size:23.5px;font-weight:400;color:#141414;transform:translateX(-50%) scaleX(1.0);transform-origin:50% 0;">-</div>
<div class="t sb" style="left:2741.3px;top:1017.7px;font-size:23.5px;font-weight:400;color:#141414;transform:translateX(-50%) scaleX(1.0);transform-origin:50% 0;">-</div>
<div class="t sb" style="left:142.5px;top:1045.6px;font-size:23.5px;font-weight:400;color:#141414;">-</div>
<div class="t sb" style="left:1663.9px;top:1045.6px;font-size:23.5px;font-weight:400;color:#141414;transform:translateX(-50%) scaleX(0.928);transform-origin:50% 0;">Yes</div>
<div class="t sb" style="left:1897.0px;top:1045.6px;font-size:23.5px;font-weight:400;color:#141414;transform:translateX(-50%) scaleX(1.0);transform-origin:50% 0;">-</div>
<div class="t sb" style="left:2066.2px;top:1045.6px;font-size:23.5px;font-weight:400;color:#141414;transform:translateX(-50%) scaleX(1.0);transform-origin:50% 0;">-</div>
<div class="t sb" style="left:2234.7px;top:1045.6px;font-size:23.5px;font-weight:400;color:#141414;transform:translateX(-50%) scaleX(1.0);transform-origin:50% 0;">-</div>
<div class="t sb" style="left:2403.9px;top:1045.6px;font-size:23.5px;font-weight:400;color:#141414;transform:translateX(-50%) scaleX(1.0);transform-origin:50% 0;">-</div>
<div class="t sb" style="left:2572.7px;top:1045.6px;font-size:23.5px;font-weight:400;color:#141414;transform:translateX(-50%) scaleX(1.0);transform-origin:50% 0;">-</div>
<div class="t sb" style="left:2741.3px;top:1045.6px;font-size:23.5px;font-weight:400;color:#141414;transform:translateX(-50%) scaleX(1.0);transform-origin:50% 0;">-</div>
<div class="t sb" style="left:142.5px;top:1073.6px;font-size:23.5px;font-weight:400;color:#141414;">-</div>
<div class="t sb" style="left:1663.9px;top:1073.6px;font-size:23.5px;font-weight:400;color:#141414;transform:translateX(-50%) scaleX(0.928);transform-origin:50% 0;">Yes</div>
<div class="t sb" style="left:1897.0px;top:1073.6px;font-size:23.5px;font-weight:400;color:#141414;transform:translateX(-50%) scaleX(1.0);transform-origin:50% 0;">-</div>
<div class="t sb" style="left:2066.2px;top:1073.6px;font-size:23.5px;font-weight:400;color:#141414;transform:translateX(-50%) scaleX(1.0);transform-origin:50% 0;">-</div>
<div class="t sb" style="left:2234.7px;top:1073.6px;font-size:23.5px;font-weight:400;color:#141414;transform:translateX(-50%) scaleX(1.0);transform-origin:50% 0;">-</div>
<div class="t sb" style="left:2403.9px;top:1073.6px;font-size:23.5px;font-weight:400;color:#141414;transform:translateX(-50%) scaleX(1.0);transform-origin:50% 0;">-</div>
<div class="t sb" style="left:2572.7px;top:1073.6px;font-size:23.5px;font-weight:400;color:#141414;transform:translateX(-50%) scaleX(1.0);transform-origin:50% 0;">-</div>
<div class="t sb" style="left:2741.3px;top:1073.6px;font-size:23.5px;font-weight:400;color:#141414;transform:translateX(-50%) scaleX(1.0);transform-origin:50% 0;">-</div>
<div class="t sb" style="left:142.5px;top:1101.6px;font-size:23.5px;font-weight:400;color:#141414;">-</div>
<div class="t sb" style="left:1663.9px;top:1101.6px;font-size:23.5px;font-weight:400;color:#141414;transform:translateX(-50%) scaleX(0.928);transform-origin:50% 0;">Yes</div>
<div class="t sb" style="left:1897.0px;top:1101.6px;font-size:23.5px;font-weight:400;color:#141414;transform:translateX(-50%) scaleX(1.0);transform-origin:50% 0;">-</div>
<div class="t sb" style="left:2066.2px;top:1101.6px;font-size:23.5px;font-weight:400;color:#141414;transform:translateX(-50%) scaleX(1.0);transform-origin:50% 0;">-</div>
<div class="t sb" style="left:2234.7px;top:1101.6px;font-size:23.5px;font-weight:400;color:#141414;transform:translateX(-50%) scaleX(1.0);transform-origin:50% 0;">-</div>
<div class="t sb" style="left:2403.9px;top:1101.6px;font-size:23.5px;font-weight:400;color:#141414;transform:translateX(-50%) scaleX(1.0);transform-origin:50% 0;">-</div>
<div class="t sb" style="left:2572.7px;top:1101.6px;font-size:23.5px;font-weight:400;color:#141414;transform:translateX(-50%) scaleX(1.0);transform-origin:50% 0;">-</div>
<div class="t sb" style="left:2741.3px;top:1101.6px;font-size:23.5px;font-weight:400;color:#141414;transform:translateX(-50%) scaleX(1.0);transform-origin:50% 0;">-</div>
<div class="t sb" style="left:142.5px;top:1129.6px;font-size:23.5px;font-weight:400;color:#141414;">-</div>
<div class="t sb" style="left:1663.9px;top:1129.6px;font-size:23.5px;font-weight:400;color:#141414;transform:translateX(-50%) scaleX(0.928);transform-origin:50% 0;">Yes</div>
<div class="t sb" style="left:1897.0px;top:1129.6px;font-size:23.5px;font-weight:400;color:#141414;transform:translateX(-50%) scaleX(1.0);transform-origin:50% 0;">-</div>
<div class="t sb" style="left:2066.2px;top:1129.6px;font-size:23.5px;font-weight:400;color:#141414;transform:translateX(-50%) scaleX(1.0);transform-origin:50% 0;">-</div>
<div class="t sb" style="left:2234.7px;top:1129.6px;font-size:23.5px;font-weight:400;color:#141414;transform:translateX(-50%) scaleX(1.0);transform-origin:50% 0;">-</div>
<div class="t sb" style="left:2403.9px;top:1129.6px;font-size:23.5px;font-weight:400;color:#141414;transform:translateX(-50%) scaleX(1.0);transform-origin:50% 0;">-</div>
<div class="t sb" style="left:2572.7px;top:1129.6px;font-size:23.5px;font-weight:400;color:#141414;transform:translateX(-50%) scaleX(1.0);transform-origin:50% 0;">-</div>
<div class="t sb" style="left:2741.3px;top:1129.6px;font-size:23.5px;font-weight:400;color:#141414;transform:translateX(-50%) scaleX(1.0);transform-origin:50% 0;">-</div>
<div class="t sb" style="left:142.5px;top:1157.6px;font-size:23.5px;font-weight:400;color:#141414;">-</div>
<div class="t sb" style="left:1663.9px;top:1157.6px;font-size:23.5px;font-weight:400;color:#141414;transform:translateX(-50%) scaleX(0.928);transform-origin:50% 0;">Yes</div>
<div class="t sb" style="left:1897.0px;top:1157.6px;font-size:23.5px;font-weight:400;color:#141414;transform:translateX(-50%) scaleX(1.0);transform-origin:50% 0;">-</div>
<div class="t sb" style="left:2066.2px;top:1157.6px;font-size:23.5px;font-weight:400;color:#141414;transform:translateX(-50%) scaleX(1.0);transform-origin:50% 0;">-</div>
<div class="t sb" style="left:2234.7px;top:1157.6px;font-size:23.5px;font-weight:400;color:#141414;transform:translateX(-50%) scaleX(1.0);transform-origin:50% 0;">-</div>
<div class="t sb" style="left:2403.9px;top:1157.6px;font-size:23.5px;font-weight:400;color:#141414;transform:translateX(-50%) scaleX(1.0);transform-origin:50% 0;">-</div>
<div class="t sb" style="left:2572.7px;top:1157.6px;font-size:23.5px;font-weight:400;color:#141414;transform:translateX(-50%) scaleX(1.0);transform-origin:50% 0;">-</div>
<div class="t sb" style="left:2741.3px;top:1157.6px;font-size:23.5px;font-weight:400;color:#141414;transform:translateX(-50%) scaleX(1.0);transform-origin:50% 0;">-</div>
<div class="t sb" style="left:142.5px;top:1185.6px;font-size:23.5px;font-weight:400;color:#141414;">-</div>
<div class="t sb" style="left:1663.9px;top:1185.6px;font-size:23.5px;font-weight:400;color:#141414;transform:translateX(-50%) scaleX(0.928);transform-origin:50% 0;">Yes</div>
<div class="t sb" style="left:1897.0px;top:1185.6px;font-size:23.5px;font-weight:400;color:#141414;transform:translateX(-50%) scaleX(1.0);transform-origin:50% 0;">-</div>
<div class="t sb" style="left:2066.2px;top:1185.6px;font-size:23.5px;font-weight:400;color:#141414;transform:translateX(-50%) scaleX(1.0);transform-origin:50% 0;">-</div>
<div class="t sb" style="left:2234.7px;top:1185.6px;font-size:23.5px;font-weight:400;color:#141414;transform:translateX(-50%) scaleX(1.0);transform-origin:50% 0;">-</div>
<div class="t sb" style="left:2403.9px;top:1185.6px;font-size:23.5px;font-weight:400;color:#141414;transform:translateX(-50%) scaleX(1.0);transform-origin:50% 0;">-</div>
<div class="t sb" style="left:2572.7px;top:1185.6px;font-size:23.5px;font-weight:400;color:#141414;transform:translateX(-50%) scaleX(1.0);transform-origin:50% 0;">-</div>
<div class="t sb" style="left:2741.3px;top:1185.6px;font-size:23.5px;font-weight:400;color:#141414;transform:translateX(-50%) scaleX(1.0);transform-origin:50% 0;">-</div>
<div class="a" style="left:138px;top:1212.2px;width:2722px;height:35.7px;background:#4bb2e6;"></div>
<div class="t" style="left:144px;top:1213.8px;font-size:29px;font-weight:700;color:#fff;transform:scaleX(1.04);transform-origin:0 0;">Total</div>
<div class="t" style="left:1545.5px;top:1216.3px;font-size:24px;font-weight:700;color:#fff;transform:translateX(-100%) scaleX(1.025);transform-origin:100% 0;">42,500</div>
<div class="t" style="left:1921.5px;top:1216.3px;font-size:24px;font-weight:700;color:#fff;transform:translateX(-100%) scaleX(1.025);transform-origin:100% 0;">12,167</div>
<div class="t" style="left:2090.7px;top:1216.3px;font-size:24px;font-weight:700;color:#fff;transform:translateX(-100%) scaleX(1.025);transform-origin:100% 0;">9,667</div>
<div class="t" style="left:2259.2px;top:1216.3px;font-size:24px;font-weight:700;color:#fff;transform:translateX(-100%) scaleX(1.025);transform-origin:100% 0;">12,333</div>
<div class="t" style="left:2428.4px;top:1216.3px;font-size:24px;font-weight:700;color:#fff;transform:translateX(-100%) scaleX(1.025);transform-origin:100% 0;">5,833</div>
<div class="t" style="left:2597.2px;top:1216.3px;font-size:24px;font-weight:700;color:#fff;transform:translateX(-100%) scaleX(1.025);transform-origin:100% 0;">1,833</div>
<div class="t" style="left:2765.8px;top:1216.3px;font-size:24px;font-weight:700;color:#fff;transform:translateX(-100%) scaleX(1.025);transform-origin:100% 0;">667</div>
<div class="t" style="left:96.9px;top:1303.6px;font-size:39.5px;font-weight:700;color:#222;transform:scaleX(1.0334);transform-origin:0 0;">Startup Costs Depreciation, $</div>
<div class="a" style="left:138px;top:1373.7px;width:2722px;height:27.899999999999864px;background:#4bb2e6;"></div>
<div class="t" style="left:143.6px;top:1375.4px;font-size:23.5px;font-weight:700;color:#fff;transform:scaleX(0.9809);transform-origin:0 0;">Opening Net Book Value</div>
<div class="t" style="left:1889.5px;top:1375.0px;font-size:24px;font-weight:700;color:#fff;transform:translateX(-50%) scaleX(1.25);transform-origin:50% 0;">-</div>
<div class="t" style="left:2090.7px;top:1375.0px;font-size:24px;font-weight:700;color:#fff;transform:translateX(-100%) scaleX(1.025);transform-origin:100% 0;">12,065</div>
<div class="t" style="left:2259.2px;top:1375.0px;font-size:24px;font-weight:700;color:#fff;transform:translateX(-100%) scaleX(1.025);transform-origin:100% 0;">21,550</div>
<div class="t" style="left:2428.4px;top:1375.0px;font-size:24px;font-weight:700;color:#fff;transform:translateX(-100%) scaleX(1.025);transform-origin:100% 0;">33,599</div>
<div class="t" style="left:2597.2px;top:1375.0px;font-size:24px;font-weight:700;color:#fff;transform:translateX(-100%) scaleX(1.025);transform-origin:100% 0;">39,099</div>
<div class="t" style="left:2765.8px;top:1375.0px;font-size:24px;font-weight:700;color:#fff;transform:translateX(-100%) scaleX(1.025);transform-origin:100% 0;">40,583</div>
<div class="t sb" style="left:163.8px;top:1402.8px;font-size:23.5px;font-weight:400;color:#141414;transform:scaleX(0.9283);transform-origin:0 0;">Expenditure - Amortizable</div>
<div class="t sb" style="left:1727.8px;top:1402.8px;font-size:23.5px;font-weight:400;color:#141414;transform:translateX(-50%) scaleX(1.0);transform-origin:50% 0;">-</div>
<div class="t sb" style="left:1924.5px;top:1402.8px;font-size:23.5px;font-weight:400;color:#141414;transform:translateX(-100%) scaleX(0.918);transform-origin:100% 0;">12,167</div>
<div class="t sb" style="left:2093.7px;top:1402.8px;font-size:23.5px;font-weight:400;color:#141414;transform:translateX(-100%) scaleX(0.918);transform-origin:100% 0;">9,667</div>
<div class="t sb" style="left:2262.2px;top:1402.8px;font-size:23.5px;font-weight:400;color:#141414;transform:translateX(-100%) scaleX(0.918);transform-origin:100% 0;">12,333</div>
<div class="t sb" style="left:2431.4px;top:1402.8px;font-size:23.5px;font-weight:400;color:#141414;transform:translateX(-100%) scaleX(0.918);transform-origin:100% 0;">5,833</div>
<div class="t sb" style="left:2600.2px;top:1402.8px;font-size:23.5px;font-weight:400;color:#141414;transform:translateX(-100%) scaleX(0.918);transform-origin:100% 0;">1,833</div>
<div class="t sb" style="left:2768.8px;top:1402.8px;font-size:23.5px;font-weight:400;color:#141414;transform:translateX(-100%) scaleX(0.918);transform-origin:100% 0;">667</div>
<div class="t sb" style="left:163.8px;top:1430.7px;font-size:23.5px;font-weight:400;color:#141414;transform:scaleX(0.9353);transform-origin:0 0;">Depreciation (Depreciation Period (Years) - 10)</div>
<div class="t sb" style="left:1924.5px;top:1430.7px;font-size:23.5px;font-weight:400;color:#141414;transform:translateX(-100%) scaleX(0.918);transform-origin:100% 0;">101</div>
<div class="t sb" style="left:2093.7px;top:1430.7px;font-size:23.5px;font-weight:400;color:#141414;transform:translateX(-100%) scaleX(0.918);transform-origin:100% 0;">182</div>
<div class="t sb" style="left:2262.2px;top:1430.7px;font-size:23.5px;font-weight:400;color:#141414;transform:translateX(-100%) scaleX(0.918);transform-origin:100% 0;">285</div>
<div class="t sb" style="left:2431.4px;top:1430.7px;font-size:23.5px;font-weight:400;color:#141414;transform:translateX(-100%) scaleX(0.918);transform-origin:100% 0;">333</div>
<div class="t sb" style="left:2600.2px;top:1430.7px;font-size:23.5px;font-weight:400;color:#141414;transform:translateX(-100%) scaleX(0.918);transform-origin:100% 0;">349</div>
<div class="t sb" style="left:2768.8px;top:1430.7px;font-size:23.5px;font-weight:400;color:#141414;transform:translateX(-100%) scaleX(0.918);transform-origin:100% 0;">354</div>
<div class="a" style="left:138px;top:1457.4px;width:2722px;height:28.0px;background:#4bb2e6;"></div>
<div class="t" style="left:143.6px;top:1459.2px;font-size:23.5px;font-weight:700;color:#fff;transform:scaleX(0.9735);transform-origin:0 0;">Closing Net Book Value</div>
<div class="t" style="left:1720.3px;top:1458.8px;font-size:24px;font-weight:700;color:#fff;transform:translateX(-50%) scaleX(1.25);transform-origin:50% 0;">-</div>
<div class="t" style="left:1921.5px;top:1458.8px;font-size:24px;font-weight:700;color:#fff;transform:translateX(-100%) scaleX(1.025);transform-origin:100% 0;">12,065</div>
<div class="t" style="left:2090.7px;top:1458.8px;font-size:24px;font-weight:700;color:#fff;transform:translateX(-100%) scaleX(1.025);transform-origin:100% 0;">21,550</div>
<div class="t" style="left:2259.2px;top:1458.8px;font-size:24px;font-weight:700;color:#fff;transform:translateX(-100%) scaleX(1.025);transform-origin:100% 0;">33,599</div>
<div class="t" style="left:2428.4px;top:1458.8px;font-size:24px;font-weight:700;color:#fff;transform:translateX(-100%) scaleX(1.025);transform-origin:100% 0;">39,099</div>
<div class="t" style="left:2597.2px;top:1458.8px;font-size:24px;font-weight:700;color:#fff;transform:translateX(-100%) scaleX(1.025);transform-origin:100% 0;">40,583</div>
<div class="t" style="left:2765.8px;top:1458.8px;font-size:24px;font-weight:700;color:#fff;transform:translateX(-100%) scaleX(1.025);transform-origin:100% 0;">40,896</div>
<div class="a" style="left:138px;top:1527.2px;width:2722px;height:28.399999999999864px;background:#4bb2e6;"></div>
<div class="t" style="left:143.6px;top:1529.4px;font-size:23.5px;font-weight:700;color:#fff;transform:scaleX(0.9809);transform-origin:0 0;">Opening Net Book Value</div>
<div class="t" style="left:1889.5px;top:1529.0px;font-size:24px;font-weight:700;color:#fff;transform:translateX(-50%) scaleX(1.25);transform-origin:50% 0;">-</div>
<div class="t" style="left:2058.7px;top:1529.0px;font-size:24px;font-weight:700;color:#fff;transform:translateX(-50%) scaleX(1.25);transform-origin:50% 0;">-</div>
<div class="t" style="left:2227.2px;top:1529.0px;font-size:24px;font-weight:700;color:#fff;transform:translateX(-50%) scaleX(1.25);transform-origin:50% 0;">-</div>
<div class="t" style="left:2396.4px;top:1529.0px;font-size:24px;font-weight:700;color:#fff;transform:translateX(-50%) scaleX(1.25);transform-origin:50% 0;">-</div>
<div class="t" style="left:2565.2px;top:1529.0px;font-size:24px;font-weight:700;color:#fff;transform:translateX(-50%) scaleX(1.25);transform-origin:50% 0;">-</div>
<div class="t" style="left:2733.8px;top:1529.0px;font-size:24px;font-weight:700;color:#fff;transform:translateX(-50%) scaleX(1.25);transform-origin:50% 0;">-</div>
<div class="t sb" style="left:163.8px;top:1556.9px;font-size:23.5px;font-weight:400;color:#141414;transform:scaleX(0.9259);transform-origin:0 0;">Expenditure - Non-Amortizable</div>
<div class="t sb" style="left:1897.0px;top:1556.9px;font-size:23.5px;font-weight:400;color:#141414;transform:translateX(-50%) scaleX(1.0);transform-origin:50% 0;">-</div>
<div class="t sb" style="left:2066.2px;top:1556.9px;font-size:23.5px;font-weight:400;color:#141414;transform:translateX(-50%) scaleX(1.0);transform-origin:50% 0;">-</div>
<div class="t sb" style="left:2234.7px;top:1556.9px;font-size:23.5px;font-weight:400;color:#141414;transform:translateX(-50%) scaleX(1.0);transform-origin:50% 0;">-</div>
<div class="t sb" style="left:2403.9px;top:1556.9px;font-size:23.5px;font-weight:400;color:#141414;transform:translateX(-50%) scaleX(1.0);transform-origin:50% 0;">-</div>
<div class="t sb" style="left:2572.7px;top:1556.9px;font-size:23.5px;font-weight:400;color:#141414;transform:translateX(-50%) scaleX(1.0);transform-origin:50% 0;">-</div>
<div class="t sb" style="left:2741.3px;top:1556.9px;font-size:23.5px;font-weight:400;color:#141414;transform:translateX(-50%) scaleX(1.0);transform-origin:50% 0;">-</div>
<div class="a" style="left:138px;top:1583.6px;width:2722px;height:27.90000000000009px;background:#4bb2e6;"></div>
<div class="t" style="left:143.6px;top:1585.3px;font-size:23.5px;font-weight:700;color:#fff;transform:scaleX(0.9735);transform-origin:0 0;">Closing Net Book Value</div>
<div class="t" style="left:1889.5px;top:1584.9px;font-size:24px;font-weight:700;color:#fff;transform:translateX(-50%) scaleX(1.25);transform-origin:50% 0;">-</div>
<div class="t" style="left:2058.7px;top:1584.9px;font-size:24px;font-weight:700;color:#fff;transform:translateX(-50%) scaleX(1.25);transform-origin:50% 0;">-</div>
<div class="t" style="left:2227.2px;top:1584.9px;font-size:24px;font-weight:700;color:#fff;transform:translateX(-50%) scaleX(1.25);transform-origin:50% 0;">-</div>
<div class="t" style="left:2396.4px;top:1584.9px;font-size:24px;font-weight:700;color:#fff;transform:translateX(-50%) scaleX(1.25);transform-origin:50% 0;">-</div>
<div class="t" style="left:2565.2px;top:1584.9px;font-size:24px;font-weight:700;color:#fff;transform:translateX(-50%) scaleX(1.25);transform-origin:50% 0;">-</div>
<div class="t" style="left:2733.8px;top:1584.9px;font-size:24px;font-weight:700;color:#fff;transform:translateX(-50%) scaleX(1.25);transform-origin:50% 0;">-</div>
<div class="a" style="left:1561px;top:1400.0px;width:206px;height:1.6px;background:#fff;"></div>
<div class="a" style="left:1561px;top:1554.0px;width:206px;height:1.6px;background:#fff;"></div>
<div class="t" style="left:94.7px;top:37.1px;font-size:18.5px;font-weight:400;color:#f2f2f2;transform:scaleX(0.9478);transform-origin:0 0;">jewelry-making.xlsx</div>
<div class="t" style="left:257.8px;top:37.1px;font-size:18.5px;font-weight:400;color:#f2f2f2;">-</div>
<div class="t" style="left:274.4px;top:37.1px;font-size:18.5px;font-weight:400;color:#f2f2f2;transform:scaleX(0.9227);transform-origin:0 0;">Read-Only</div>
<div class="a" style="left:2621px;top:87px;width:134.5px;height:36px;background:#2b2b2b;border:1px solid #5a5a5a;border-radius:6px;box-sizing:border-box;"></div>
<div class="t" style="left:2652.7px;top:95.2px;font-size:19.5px;font-weight:400;color:#f2f2f2;transform:scaleX(0.9864);transform-origin:0 0;">Comments</div>
<div class="a" style="left:2768.3px;top:87px;width:104.6px;height:36px;background:#3fb36b;border-radius:6px;"></div>
<div class="t" style="left:2799.5px;top:95.2px;font-size:19.5px;font-weight:400;color:#0c1f14;transform:scaleX(0.9222);transform-origin:0 0;">Share</div>
<div class="t" style="left:42.7px;top:96.2px;font-size:19.5px;font-weight:400;color:#f2f2f2;transform:scaleX(0.9197);transform-origin:0 0;">File</div>
<div class="t" style="left:111.7px;top:96.2px;font-size:19.5px;font-weight:700;color:#f2f2f2;transform:scaleX(1.0021);transform-origin:0 0;">Home</div>
<div class="t" style="left:198.6px;top:96.2px;font-size:19.5px;font-weight:400;color:#f2f2f2;transform:scaleX(0.9635);transform-origin:0 0;">Insert</div>
<div class="t" style="left:277.3px;top:96.2px;font-size:19.5px;font-weight:400;color:#f2f2f2;transform:scaleX(0.9821);transform-origin:0 0;">Draw</div>
<div class="t" style="left:353.3px;top:96.2px;font-size:19.5px;font-weight:400;color:#f2f2f2;transform:scaleX(0.9615);transform-origin:0 0;">Page Layout</div>
<div class="t" style="left:491px;top:96.2px;font-size:19.5px;font-weight:400;color:#f2f2f2;transform:scaleX(0.9842);transform-origin:0 0;">Formulas</div>
<div class="t" style="left:600.6px;top:96.2px;font-size:19.5px;font-weight:400;color:#f2f2f2;transform:scaleX(0.9659);transform-origin:0 0;">Data</div>
<div class="t" style="left:670.9px;top:96.2px;font-size:19.5px;font-weight:400;color:#f2f2f2;transform:scaleX(0.9322);transform-origin:0 0;">Review</div>
<div class="t" style="left:761.8px;top:96.2px;font-size:19.5px;font-weight:400;color:#f2f2f2;transform:scaleX(0.978);transform-origin:0 0;">View</div>
<div class="t" style="left:834px;top:96.2px;font-size:19.5px;font-weight:400;color:#f2f2f2;transform:scaleX(1.0363);transform-origin:0 0;">Automate</div>
<div class="t" style="left:951px;top:96.2px;font-size:19.5px;font-weight:400;color:#f2f2f2;transform:scaleX(1.0097);transform-origin:0 0;">Help</div>
<div class="a" style="left:111px;top:120.2px;width:58px;height:2.8px;background:#5fc187;border-radius:2px;"></div>
<div class="t" style="left:52.2px;top:193.4px;font-size:18px;font-weight:400;color:#8d8d8d;transform:scaleX(0.8646);transform-origin:0 0;">Paste</div>
<div class="t" style="left:142.4px;top:142.4px;font-size:18px;font-weight:400;color:#f2f2f2;transform:scaleX(0.9495);transform-origin:0 0;">Cut</div>
<div class="t" style="left:142.4px;top:182.3px;font-size:18px;font-weight:400;color:#f2f2f2;transform:scaleX(0.9755);transform-origin:0 0;">Copy</div>
<div class="t" style="left:142.9px;top:220.5px;font-size:18px;font-weight:400;color:#f2f2f2;transform:scaleX(0.9584);transform-origin:0 0;">Format Painter</div>
<div class="t" style="left:109.7px;top:253.2px;font-size:16px;font-weight:400;color:#f2f2f2;transform:scaleX(0.9827);transform-origin:0 0;">Clipboard</div>
<div class="a" style="left:281.7px;top:134.7px;width:1px;height:133.5px;background:#555;"></div>
<div class="a" style="left:295.2px;top:146.1px;width:180.5px;height:35.8px;background:transparent;border:1.3px solid #6b6b6b;border-radius:6px;box-sizing:border-box;"></div>
<div class="t" style="left:298.4px;top:154.6px;font-size:18px;font-weight:400;color:#f2f2f2;transform:scaleX(0.9883);transform-origin:0 0;">Tahoma</div>
<div class="a" style="left:479.3px;top:146.1px;width:64px;height:35.8px;background:transparent;border:1.3px solid #6b6b6b;border-radius:6px;box-sizing:border-box;"></div>
<div class="t" style="left:482.2px;top:154.6px;font-size:18px;font-weight:400;color:#f2f2f2;transform:scaleX(0.9485);transform-origin:0 0;">8</div>
<div class="t" style="left:553.8px;top:147.6px;font-size:26.5px;font-weight:400;color:#d8d8d8;transform:scaleX(0.9498);transform-origin:0 0;">A</div>
<div class="t" style="left:595.5px;top:152.1px;font-size:21.5px;font-weight:400;color:#d8d8d8;transform:scaleX(0.9133);transform-origin:0 0;">A</div>
<div class="a" style="left:633.0px;top:135px;width:1px;height:133.8px;background:#555;"></div>
<div class="t" style="left:307.6px;top:198.2px;font-size:21.5px;font-weight:700;color:#ddd;transform:scaleX(0.7533);transform-origin:0 0;">B</div>
<div class="t" style="left:347px;top:198.2px;font-size:21.5px;font-weight:400;color:#ddd;transform:scaleX(1.6042);transform-origin:0 0;font-style:italic;font-family:Liberation Serif;">I</div>
<div class="t" style="left:383.6px;top:197.9px;font-size:19.5px;font-weight:400;color:#ddd;transform:scaleX(0.9366);transform-origin:0 0;">U</div>
<div class="a" style="left:383.6px;top:219.2px;width:13.2px;height:1.5px;background:#ddd;"></div>
<div class="a" style="left:433.8px;top:193.6px;width:1px;height:36.400000000000006px;background:#555;"></div>
<div class="a" style="left:499.0px;top:193.6px;width:1px;height:36.400000000000006px;background:#555;"></div>
<div class="a" style="left:508.8px;top:218px;width:24.2px;height:5.8px;background:#ffff00;"></div>
<div class="t" style="left:575px;top:196.5px;font-size:21.5px;font-weight:400;color:#ddd;transform:scaleX(1.0179);transform-origin:0 0;">A</div>
<div class="a" style="left:570px;top:217.7px;width:24px;height:6.1px;background:#ff0000;"></div>
<div class="t" style="left:430.4px;top:253.6px;font-size:16px;font-weight:400;color:#f2f2f2;transform:scaleX(0.9558);transform-origin:0 0;">Font</div>
<div class="a" style="left:685.3px;top:146px;width:35.4px;height:35.5px;background:#3c3c3c;border:1.3px solid #8a8a8a;border-radius:6px;box-sizing:border-box;"></div>
<div class="a" style="left:763.3px;top:146.4px;width:1px;height:35.599999999999994px;background:#555;"></div>
<div class="a" style="left:851.0px;top:144.6px;width:1px;height:93.1px;background:#555;"></div>
<div class="t" style="left:897.5px;top:154.7px;font-size:18px;font-weight:400;color:#f2f2f2;transform:scaleX(0.9642);transform-origin:0 0;">Wrap Text</div>
<div class="a" style="left:763.3px;top:194px;width:1px;height:35.5px;background:#555;"></div>
<div class="t" style="left:897.5px;top:202.7px;font-size:18px;font-weight:400;color:#f2f2f2;transform:scaleX(0.9877);transform-origin:0 0;">Merge &amp; Center</div>
<div class="t" style="left:810.2px;top:253.4px;font-size:16px;font-weight:400;color:#f2f2f2;transform:scaleX(1.009);transform-origin:0 0;">Alignment</div>
<div class="a" style="left:1082.9px;top:135.5px;width:1px;height:133.3px;background:#555;"></div>
<div class="a" style="left:1096.6px;top:146.4px;width:217px;height:35px;background:transparent;border:1.3px solid #6b6b6b;border-radius:6px;box-sizing:border-box;"></div>
<div class="t" style="left:1099.6px;top:154.4px;font-size:18px;font-weight:400;color:#f2f2f2;transform:scaleX(0.9025);transform-origin:0 0;">General</div>
<div class="t" style="left:1107.4px;top:198.7px;font-size:23px;font-weight:400;color:#d8d8d8;transform:scaleX(0.8752);transform-origin:0 0;">$</div>
<div class="t" style="left:1163.8px;top:200.7px;font-size:24px;font-weight:400;color:#d8d8d8;transform:scaleX(1.0307);transform-origin:0 0;">%</div>
<div class="a" style="left:1234.8px;top:194.4px;width:1px;height:35.5px;background:#555;"></div>
<div class="t" style="left:1163.4px;top:253.6px;font-size:16px;font-weight:400;color:#f2f2f2;transform:scaleX(0.9999);transform-origin:0 0;">Number</div>
<div class="a" style="left:1324.9px;top:135.6px;width:1px;height:132.4px;background:#555;"></div>
<div class="t" style="left:1347.3px;top:193.6px;font-size:18px;font-weight:400;color:#f2f2f2;transform:scaleX(0.9704);transform-origin:0 0;">Insert</div>
<div class="t" style="left:1409.8px;top:193.6px;font-size:18px;font-weight:400;color:#f2f2f2;transform:scaleX(0.9437);transform-origin:0 0;">Delete</div>
<div class="t" style="left:1472.9px;top:191.6px;font-size:18px;font-weight:400;color:#f2f2f2;transform:scaleX(0.9822);transform-origin:0 0;">Format</div>
<div class="t" style="left:1418.2px;top:254.6px;font-size:16px;font-weight:400;color:#f2f2f2;transform:scaleX(0.8942);transform-origin:0 0;">Cells</div>
<div class="a" style="left:1542.8px;top:135.3px;width:1px;height:132.89999999999998px;background:#555;"></div>
<div class="t" style="left:1593.5px;top:142.6px;font-size:18px;font-weight:400;color:#f2f2f2;transform:scaleX(0.9926);transform-origin:0 0;">AutoSum</div>
<div class="t" style="left:1593.5px;top:181.2px;font-size:18px;font-weight:400;color:#f2f2f2;transform:scaleX(0.8478);transform-origin:0 0;">Fill</div>
<div class="t" style="left:1593px;top:220.3px;font-size:18px;font-weight:400;color:#f2f2f2;transform:scaleX(0.9206);transform-origin:0 0;">Clear</div>
<div class="t" style="left:1729.7px;top:137.3px;font-size:24.5px;font-weight:400;color:#4aa3e8;transform:scaleX(0.9055);transform-origin:0 0;">A</div>
<div class="t" style="left:1729.7px;top:158.5px;font-size:24.5px;font-weight:400;color:#ddd;transform:scaleX(0.9019);transform-origin:0 0;">Z</div>
<div class="t" style="left:1725.5px;top:191.4px;font-size:18px;font-weight:400;color:#f2f2f2;transform:scaleX(1.0334);transform-origin:0 0;">Sort &amp;</div>
<div class="t" style="left:1724.4px;top:215.0px;font-size:18px;font-weight:400;color:#f2f2f2;transform:scaleX(0.95);transform-origin:0 0;">Filter</div>
<div class="t" style="left:1795px;top:191.4px;font-size:18px;font-weight:400;color:#f2f2f2;transform:scaleX(1.0167);transform-origin:0 0;">Find &amp;</div>
<div class="t" style="left:1790.5px;top:215.0px;font-size:18px;font-weight:400;color:#f2f2f2;transform:scaleX(0.9154);transform-origin:0 0;">Select</div>
<div class="t" style="left:1682.2px;top:254.8px;font-size:16px;font-weight:400;color:#f2f2f2;transform:scaleX(0.9832);transform-origin:0 0;">Editing</div>
<div class="a" style="left:1867.8px;top:135.3px;width:1px;height:132.89999999999998px;background:#555;"></div>
<div class="t" style="left:1885.2px;top:191.4px;font-size:18px;font-weight:400;color:#f2f2f2;transform:scaleX(1.0126);transform-origin:0 0;">Add-ins</div>
<div class="t" style="left:1888px;top:254.8px;font-size:16px;font-weight:400;color:#f2f2f2;transform:scaleX(0.9843);transform-origin:0 0;">Add-ins</div>
<div class="a" style="left:1962.8px;top:135.3px;width:1px;height:132.89999999999998px;background:#555;"></div>
<div class="t" style="left:1980.2px;top:191.4px;font-size:18px;font-weight:400;color:#f2f2f2;transform:scaleX(0.9493);transform-origin:0 0;">Analyze</div>
<div class="t" style="left:1992.4px;top:215.0px;font-size:18px;font-weight:400;color:#f2f2f2;transform:scaleX(0.944);transform-origin:0 0;">Data</div>
<div class="a" style="left:2056.3px;top:135.3px;width:1px;height:132.89999999999998px;background:#555;"></div>
<div class="t" style="left:2306.2px;top:150.9px;font-size:52px;font-weight:700;color:#fff;transform:translateX(-50%) scaleX(0.7839);transform-origin:50% 0;-webkit-text-stroke:1.6px #fff;">F</div>
<div class="t" style="left:2325.5px;top:150.9px;font-size:52px;font-weight:700;color:#fff;transform:translateX(-50%) scaleX(0.8095);transform-origin:50% 0;-webkit-text-stroke:1.6px #fff;">I</div>
<div class="t" style="left:2350.35px;top:150.9px;font-size:52px;font-weight:700;color:#fff;transform:translateX(-50%) scaleX(0.8998);transform-origin:50% 0;-webkit-text-stroke:1.6px #fff;">N</div>
<div class="t" style="left:2390.45px;top:150.9px;font-size:52px;font-weight:700;color:#fff;transform:translateX(-50%) scaleX(0.9555);transform-origin:50% 0;-webkit-text-stroke:1.6px #fff;">M</div>
<div class="t" style="left:2468.15px;top:150.9px;font-size:52px;font-weight:700;color:#fff;transform:translateX(-50%) scaleX(0.9105);transform-origin:50% 0;-webkit-text-stroke:1.6px #fff;">D</div>
<div class="t" style="left:2498.6px;top:150.9px;font-size:52px;font-weight:700;color:#fff;transform:translateX(-50%) scaleX(0.6832);transform-origin:50% 0;-webkit-text-stroke:1.6px #fff;">E</div>
<div class="t" style="left:2523.25px;top:150.9px;font-size:52px;font-weight:700;color:#fff;transform:translateX(-50%) scaleX(0.68);transform-origin:50% 0;-webkit-text-stroke:1.6px #fff;">L</div>
<div class="t" style="left:2548.0px;top:150.9px;font-size:52px;font-weight:700;color:#fff;transform:translateX(-50%) scaleX(0.8332);transform-origin:50% 0;-webkit-text-stroke:1.6px #fff;">S</div>
<div class="t" style="left:2575.1499999999996px;top:150.9px;font-size:52px;font-weight:700;color:#fff;transform:translateX(-50%) scaleX(0.68);transform-origin:50% 0;-webkit-text-stroke:1.6px #fff;">L</div>
<div class="t" style="left:2604.0px;top:150.9px;font-size:52px;font-weight:700;color:#fff;transform:translateX(-50%) scaleX(0.9824);transform-origin:50% 0;-webkit-text-stroke:1.6px #fff;">A</div>
<div class="t" style="left:2637.85px;top:150.9px;font-size:52px;font-weight:700;color:#fff;transform:translateX(-50%) scaleX(0.804);transform-origin:50% 0;-webkit-text-stroke:1.6px #fff;">B</div>
<svg style="left:0;top:0;position:absolute" width="2902" height="1762"><circle cx="2431.5" cy="180.2" r="13.6" fill="none" stroke="#fff" stroke-width="9"/><rect x="2424.6" y="157" width="13.8" height="19.5" rx="5" fill="#292929"/><rect x="2426.9" y="154.6" width="9.2" height="27" rx="4.6" fill="#fff"/></svg>
<div class="t" style="left:2306.4px;top:205.7px;font-size:34px;font-weight:400;color:#fff;transform:translateX(-50%) scaleX(1.0);transform-origin:50% 0;">T</div>
<div class="t" style="left:2347.6px;top:205.7px;font-size:34px;font-weight:400;color:#fff;transform:translateX(-50%) scaleX(1.0);transform-origin:50% 0;">e</div>
<div class="t" style="left:2397.4px;top:205.7px;font-size:34px;font-weight:400;color:#fff;transform:translateX(-50%) scaleX(1.0);transform-origin:50% 0;">m</div>
<div class="t" style="left:2438.5px;top:205.7px;font-size:34px;font-weight:400;color:#fff;transform:translateX(-50%) scaleX(1.0);transform-origin:50% 0;">p</div>
<div class="t" style="left:2485.2px;top:205.7px;font-size:34px;font-weight:400;color:#fff;transform:translateX(-50%) scaleX(1.0);transform-origin:50% 0;">l</div>
<div class="t" style="left:2521px;top:205.7px;font-size:34px;font-weight:400;color:#fff;transform:translateX(-50%) scaleX(1.0);transform-origin:50% 0;">a</div>
<div class="t" style="left:2560.5px;top:205.7px;font-size:34px;font-weight:400;color:#fff;transform:translateX(-50%) scaleX(1.0);transform-origin:50% 0;">t</div>
<div class="t" style="left:2604.6px;top:205.7px;font-size:34px;font-weight:400;color:#fff;transform:translateX(-50%) scaleX(1.0);transform-origin:50% 0;">e</div>
<div class="t" style="left:2642px;top:205.7px;font-size:34px;font-weight:400;color:#fff;transform:translateX(-50%) scaleX(1.0);transform-origin:50% 0;">s</div>
<div class="t" style="left:190.7px;top:1684.4px;font-size:20px;font-weight:400;color:#f0f0f0;transform:scaleX(1.0242);transform-origin:0 0;">Contents</div>
<div class="a" style="left:292.3px;top:1680px;width:1px;height:26px;background:#4a4a4a;"></div>
<div class="a" style="left:432.9px;top:1680px;width:1px;height:26px;background:#4a4a4a;"></div>
<div class="a" style="left:551.5px;top:1680px;width:1px;height:26px;background:#4a4a4a;"></div>
<div class="a" style="left:722.5px;top:1680px;width:1px;height:26px;background:#4a4a4a;"></div>
<div class="a" style="left:825.0px;top:1680px;width:1px;height:26px;background:#4a4a4a;"></div>
<div class="a" style="left:924.5px;top:1680px;width:1px;height:26px;background:#4a4a4a;"></div>
<div class="a" style="left:1052.5px;top:1680px;width:1px;height:26px;background:#4a4a4a;"></div>
<div class="a" style="left:1153.9px;top:1680px;width:1px;height:26px;background:#4a4a4a;"></div>
<div class="a" style="left:1208.5px;top:1680px;width:1px;height:26px;background:#4a4a4a;"></div>
<div class="a" style="left:1270.2px;top:1680px;width:1px;height:26px;background:#4a4a4a;"></div>
<div class="a" style="left:1331.1px;top:1680px;width:1px;height:26px;background:#4a4a4a;"></div>
<div class="a" style="left:1458.9px;top:1680px;width:1px;height:26px;background:#4a4a4a;"></div>
<div class="a" style="left:1586.8px;top:1680px;width:1px;height:26px;background:#4a4a4a;"></div>
<div class="a" style="left:1714.2px;top:1680px;width:1px;height:26px;background:#4a4a4a;"></div>
<div class="a" style="left:1775.1px;top:1680px;width:1px;height:26px;background:#4a4a4a;"></div>
<div class="a" style="left:1860.3px;top:1680px;width:1px;height:26px;background:#4a4a4a;"></div>
<div class="a" style="left:1958.5px;top:1680px;width:1px;height:26px;background:#4a4a4a;"></div>
<div class="a" style="left:2034.9px;top:1680px;width:1px;height:26px;background:#4a4a4a;"></div>
<div class="a" style="left:299.3px;top:1676.4px;width:127.59999999999997px;height:35.2px;background:#fff16b;border-radius:7px;"></div>
<div class="t" style="left:363.1px;top:1684.4px;font-size:20px;font-weight:400;color:#111;transform:translateX(-50%) scaleX(1.0);transform-origin:50% 0;">Dashboard</div>
<div class="a" style="left:440px;top:1676.4px;width:105.60000000000002px;height:35.2px;background:#fff16b;border-radius:7px;"></div>
<div class="t" style="left:492.8px;top:1684.4px;font-size:20px;font-weight:400;color:#111;transform:translateX(-50%) scaleX(1.0);transform-origin:50% 0;">Revenue</div>
<div class="a" style="left:559.3px;top:1676.4px;width:157.30000000000007px;height:35.2px;background:#fff16b;border-radius:7px;"></div>
<div class="t" style="left:637.95px;top:1684.4px;font-size:20px;font-weight:400;color:#111;transform:translateX(-50%) scaleX(1.0);transform-origin:50% 0;">COGS &amp; OPEX</div>
<div class="a" style="left:730.3px;top:1676.4px;width:88.70000000000005px;height:35.2px;background:#fff16b;border-radius:7px;"></div>
<div class="t" style="left:774.65px;top:1684.4px;font-size:20px;font-weight:400;color:#111;transform:translateX(-50%) scaleX(1.0);transform-origin:50% 0;">Payroll</div>
<div class="a" style="left:932px;top:1676.4px;width:112.90000000000009px;height:35.2px;background:#fff16b;border-radius:7px;"></div>
<div class="t" style="left:988.45px;top:1684.4px;font-size:20px;font-weight:400;color:#111;transform:translateX(-50%) scaleX(1.0);transform-origin:50% 0;">CapTable</div>
<div class="a" style="left:1057.6px;top:1676.4px;width:90.40000000000009px;height:35.2px;background:#fff16b;border-radius:7px;"></div>
<div class="t" style="left:1102.8px;top:1684.4px;font-size:20px;font-weight:400;color:#111;transform:translateX(-50%) scaleX(1.0);transform-origin:50% 0;">Capital</div>
<div class="a" style="left:1160.8px;top:1676.4px;width:41.700000000000045px;height:35.2px;background:#4bb2e6;border-radius:7px;"></div>
<div class="t" style="left:1181.65px;top:1684.4px;font-size:20px;font-weight:400;color:#111;transform:translateX(-50%) scaleX(1.0);transform-origin:50% 0;">IS</div>
<div class="a" style="left:1216px;top:1676.4px;width:47.40000000000009px;height:35.2px;background:#4bb2e6;border-radius:7px;"></div>
<div class="t" style="left:1239.7px;top:1684.4px;font-size:20px;font-weight:400;color:#111;transform:translateX(-50%) scaleX(1.0);transform-origin:50% 0;">CF</div>
<div class="a" style="left:1277px;top:1676.4px;width:47.799999999999955px;height:35.2px;background:#4bb2e6;border-radius:7px;"></div>
<div class="t" style="left:1300.9px;top:1684.4px;font-size:20px;font-weight:400;color:#111;transform:translateX(-50%) scaleX(1.0);transform-origin:50% 0;">BS</div>
<div class="a" style="left:1338px;top:1676.4px;width:114.59999999999991px;height:35.2px;background:#4bb2e6;border-radius:7px;"></div>
<div class="t" style="left:1395.3px;top:1684.4px;font-size:20px;font-weight:400;color:#111;transform:translateX(-50%) scaleX(1.0);transform-origin:50% 0;">Scenarios</div>
<div class="a" style="left:1465.8px;top:1676.4px;width:114.60000000000014px;height:35.2px;background:#4bb2e6;border-radius:7px;"></div>
<div class="t" style="left:1523.1px;top:1684.4px;font-size:20px;font-weight:400;color:#111;transform:translateX(-50%) scaleX(1.0);transform-origin:50% 0;">Valuation</div>
<div class="a" style="left:1593.6px;top:1676.4px;width:113.80000000000018px;height:35.2px;background:#4bb2e6;border-radius:7px;"></div>
<div class="t" style="left:1650.5px;top:1684.4px;font-size:20px;font-weight:400;color:#111;transform:translateX(-50%) scaleX(1.0);transform-origin:50% 0;">Summary</div>
<div class="a" style="left:1721px;top:1676.4px;width:47.299999999999955px;height:35.2px;background:#4bb2e6;border-radius:7px;"></div>
<div class="t" style="left:1744.65px;top:1684.4px;font-size:20px;font-weight:400;color:#111;transform:translateX(-50%) scaleX(1.0);transform-origin:50% 0;">BE</div>
<div class="a" style="left:1782px;top:1676.4px;width:71px;height:35.2px;background:#4bb2e6;border-radius:7px;"></div>
<div class="t" style="left:1817.5px;top:1684.4px;font-size:20px;font-weight:400;color:#111;transform:translateX(-50%) scaleX(1.0);transform-origin:50% 0;">ROIC</div>
<div class="a" style="left:1867.2px;top:1676.4px;width:84.39999999999986px;height:35.2px;background:#4bb2e6;border-radius:7px;"></div>
<div class="t" style="left:1909.4px;top:1684.4px;font-size:20px;font-weight:400;color:#111;transform:translateX(-50%) scaleX(1.0);transform-origin:50% 0;">Charts</div>
<div class="a" style="left:1965px;top:1676.4px;width:63.5px;height:35.2px;background:#4bb2e6;border-radius:7px;"></div>
<div class="t" style="left:1996.75px;top:1684.4px;font-size:20px;font-weight:400;color:#111;transform:translateX(-50%) scaleX(1.0);transform-origin:50% 0;">KPIs</div>
<div class="a" style="left:2042.3px;top:1676.4px;width:29.3px;height:35.2px;overflow:hidden"><div class="a" style="left:0;top:0;width:80px;height:35.2px;background:#4bb2e6;border-radius:7px"></div><div class="t" style="left:8px;top:8.0px;font-size:20px;color:#111">Sc</div></div>
<svg style="left:0;top:0;position:absolute" width="2902" height="1762"><path d="M823.5 1671 Q831.7 1671 831.7 1679 V1704 Q831.7 1712 839.7 1712 H910.6 Q918.6 1712 918.6 1704 V1679 Q918.6 1671 926.6 1671 Z" fill="#fdfbea"/></svg>
<div class="t" style="left:875.2px;top:1681.4px;font-size:20px;font-weight:400;color:#111;transform:translateX(-50%) scaleX(0.9143);transform-origin:50% 0;">CAPEX</div>
<div class="a" style="left:844px;top:1706px;width:62px;height:3px;background:#1a7a3c;border-radius:1px;"></div>
<div class="a" style="left:2216px;top:1680px;width:643.7px;height:26.4px;background:#1a1a1a;border-radius:13px;"></div>
<div class="a" style="left:2241.6px;top:1687px;width:55.4px;height:12.2px;background:#9b9b9b;border-radius:6px;"></div>
<div class="t" style="left:27.3px;top:1725.6px;font-size:17px;font-weight:400;color:#e6e6e6;transform:scaleX(0.8649);transform-origin:0 0;">Ready</div>
<div class="t" style="left:173.4px;top:1725.6px;font-size:17px;font-weight:700;color:#f0f0f0;transform:scaleX(0.922);transform-origin:0 0;">Accessibility: Investigate</div>
<div class="a" style="left:2445px;top:1719px;width:59.7px;height:31px;background:#262626;"></div>
<div class="a" style="left:2731.6px;top:1726.7px;width:9.4px;height:16.3px;background:#9b9b9b;border-radius:1px;"></div>
<div class="t" style="left:2840px;top:1726.6px;font-size:17px;font-weight:400;color:#e6e6e6;transform:scaleX(0.8739);transform-origin:0 0;">140%</div>
<div class="a" style="left:2870px;top:304px;width:12px;height:1309px;background:#9b9b9b;border-radius:6px;"></div>
<svg style="left:0;top:0;position:absolute" width="2902" height="1762" viewBox="0 0 2902 1762"><rect x="38.2" y="35" width="19.4" height="24" rx="2.5" fill="#22702a"/><path d="M38.2 37.5 a2.5 2.5 0 0 1 2.5 -2.5 H55.1 a2.5 2.5 0 0 1 2.5 2.5 V43.6 H38.2 Z" fill="#6bd35a"/><path d="M47.6 35 H55.1 a2.5 2.5 0 0 1 2.5 2.5 V43.6 H47.6 Z" fill="#b5e67a"/><rect x="35.2" y="42.9" width="12.5" height="12.5" rx="2" fill="#0f5e34"/><path d="M38.6 45.2 L44.6 52.6 M44.6 45.2 L38.6 52.6" stroke="#f4fff4" stroke-width="2.3"/><path d="M364.5 44.8 L371.2 51.2 L377.9 44.8" fill="none" stroke="#eee" stroke-width="1.7"/><circle cx="2489" cy="42.6" r="6.6" fill="none" stroke="#eee" stroke-width="1.6"/><path d="M2484.3 47.3 L2476.5 56.6" stroke="#eee" stroke-width="1.7"/><defs><clipPath id="av"><circle cx="2571" cy="46.8" r="18"/></clipPath><linearGradient id="avg" x1="0" y1="0" x2="0" y2="1"><stop offset="0" stop-color="#dfe2ee"/><stop offset="0.28" stop-color="#b4c0dc"/><stop offset="0.42" stop-color="#b8ccd0"/><stop offset="1" stop-color="#a4c8c4"/></linearGradient><filter id="avb" x="-20%" y="-20%" width="140%" height="140%"><feGaussianBlur stdDeviation="0.9"/></filter></defs><g clip-path="url(#av)"><rect x="2553" y="28.8" width="36" height="36" fill="url(#avg)"/><g filter="url(#avb)"><path d="M2556 66 Q2559 56 2571 55 Q2583 56 2587 66 Z" fill="#d8cdc2"/><ellipse cx="2571.5" cy="46.5" rx="7.2" ry="10" fill="#a07c6a"/><ellipse cx="2571.5" cy="39" rx="6.5" ry="3.5" fill="#8a6656"/><path d="M2566 55 Q2571 59 2577 55 L2578 61 H2565 Z" fill="#7e604f"/></g></g><path d="M2633.5 36 H2648 L2652.7 43 L2640.8 56.8 L2628.9 43 Z M2628.9 43 H2652.7 M2636.5 43 L2640.8 56.8 L2645 43 M2633.5 36 L2636.5 43 L2640.8 36 L2645 43 L2648 36" fill="none" stroke="#eee" stroke-width="1.5" stroke-linejoin="round"/><path d="M2703 45.8 H2719" stroke="#eee" stroke-width="1.6"/><rect x="2775.5" y="42.5" width="12" height="12" rx="2.2" fill="none" stroke="#eee" stroke-width="1.6"/><path d="M2778.5 40.3 H2787.5 a3 3 0 0 1 3 3 V52" fill="none" stroke="#eee" stroke-width="1.6"/><path d="M2847.2 40 L2862.6 54.4 M2862.6 40 L2847.2 54.4" stroke="#eee" stroke-width="1.7"/><path d="M2629.5 97.5 H2645 V108.5 H2635 L2631 112.5 V108.5 H2629.5 Z" fill="none" stroke="#eee" stroke-width="1.5" stroke-linejoin="round"/><path d="M2775.5 104 V113 H2791 V109" fill="none" stroke="#0c2a18" stroke-width="1.5"/><path d="M2779 109.5 Q2780 101 2788 100.5 V97 L2792.5 102.5 L2788 107.5 V104 Q2782 104 2779 109.5 Z" fill="none" stroke="#0c2a18" stroke-width="1.5" stroke-linejoin="round"/><path d="M2858.5 103.2 L2862 106.7 L2865.5 103.2" fill="none" stroke="#0c1f14" stroke-width="1.5"/><path d="M57 148.5 H62.5 M80.5 148.5 H86 V158 M74.5 183 H57 V148.5" fill="none" stroke="#a0a0a0" stroke-width="2.6"/><path d="M63.5 152 V146 H68 a3.5 3.5 0 0 1 7 0 H79.5 V152 Z" fill="none" stroke="#a0a0a0" stroke-width="1.8"/><rect x="75.5" y="159.5" width="20" height="25.5" fill="none" stroke="#a0a0a0" stroke-width="1.7"/><path d="M67.2 224.4 L71.2 228.4 L75.2 224.4" fill="none" stroke="#8d8d8d" stroke-width="1.5"/><path d="M120 140 L127.5 157.5 M130 140 L122.5 157.5" stroke="#ddd" stroke-width="1.3"/><circle cx="120" cy="160" r="3" fill="none" stroke="#4aa3e8" stroke-width="2"/><circle cx="128.8" cy="160" r="3" fill="none" stroke="#4aa3e8" stroke-width="2"/><path d="M123 196.5 H112.5 V179.5 H123.5 L125.5 182" fill="none" stroke="#ddd" stroke-width="1.6"/><path d="M121.5 201.5 V184 H131 L136 189 V202 Z M131 184 V189 H136 M125 194.5 H133 M125 198 H133" fill="none" stroke="#ddd" stroke-width="1.6"/><path d="M211.3 190.0 L215.3 194.0 L219.3 190.0" fill="none" stroke="#e0e0e0" stroke-width="1.5"/><path d="M117.8 233 L128.6 234.2 L122.8 239 Z" fill="#e8a020"/><path d="M112.3 228.5 Q118 224.5 123 223.6 L132.2 230.4 Q126 235.5 122.8 239.5 Z" fill="none" stroke="#f3dc9c" stroke-width="1.5" stroke-linejoin="round"/><path d="M115.5 229.5 L129.5 231" stroke="#141414" stroke-width="0.8"/><path d="M123 223.6 L125 221.2 L127.6 223.8 L132.6 218.8 A2.2 2.2 0 0 1 135.8 221.9 L130.7 227 L132.8 229.6 L132.2 230.4" fill="none" stroke="#e6e6e6" stroke-width="1.5" stroke-linejoin="round"/><path d="M265.8 268.2 V257.8 H276.2" fill="none" stroke="#ddd" stroke-width="1.5"/><path d="M269 261 L276 268 M270.5 268 H276 V262.5" fill="none" stroke="#ddd" stroke-width="1.5"/><path d="M463.2 162.3 L467.2 166.3 L471.2 162.3" fill="none" stroke="#e0e0e0" stroke-width="1.5"/><path d="M531.2 162.3 L535.2 166.3 L539.2 162.3" fill="none" stroke="#e0e0e0" stroke-width="1.5"/><path d="M569.3 158 L572.8 154.3 L576.3 158" fill="none" stroke="#4aa3e8" stroke-width="1.7"/><path d="M608.5 153.75 L612 157.25 L615.5 153.75" fill="none" stroke="#4aa3e8" stroke-width="1.6"/><path d="M415.4 210.0 L419.4 214.0 L423.4 210.0" fill="none" stroke="#e0e0e0" stroke-width="1.5"/><rect x="444.8" y="200.5" width="21.6" height="20" fill="none" stroke="#ddd" stroke-width="1.4" stroke-dasharray="1.6 1.6"/><path d="M455.6 201 V220 M445 210.5 H466" fill="none" stroke="#ddd" stroke-width="1.4" stroke-dasharray="1.6 1.6"/><path d="M444 221.8 H467.2" stroke="#eee" stroke-width="2"/><path d="M480.4 210.0 L484.4 214.0 L488.4 210.0" fill="none" stroke="#e0e0e0" stroke-width="1.5"/><path d="M514 208.5 L522 200.5 L530.5 209 L523.5 216 Z" fill="none" stroke="#ddd" stroke-width="1.5" stroke-linejoin="round"/><path d="M519 203.5 V199" stroke="#ddd" stroke-width="1.5"/><path d="M528 205 Q531 201 532 210" fill="none" stroke="#4aa3e8" stroke-width="2"/><path d="M545.2 210.0 L549.2 214.0 L553.2 210.0" fill="none" stroke="#e0e0e0" stroke-width="1.5"/><path d="M606.3 210.0 L610.3 214.0 L614.3 210.0" fill="none" stroke="#e0e0e0" stroke-width="1.5"/><path d="M616.8 268.2 V257.8 H627.2" fill="none" stroke="#ddd" stroke-width="1.5"/><path d="M620 261 L627 268 M621.5 268 H627 V262.5" fill="none" stroke="#ddd" stroke-width="1.5"/><path d="M653 152.8 H674.7 M656.4 158.7 H671 M653 164.7 H674.7 " stroke="#ddd" stroke-width="1.9"/><path d="M692 157 H714 M695.2 163.2 H710.8 M692 169 H714 " stroke="#ddd" stroke-width="1.9"/><path d="M731.3 162.9 H752.9 M734.6999999999999 168.9 H749.5 M731.3 174.9 H752.9 " stroke="#ddd" stroke-width="1.9"/><text x="0" y="0" transform="translate(778 171) rotate(-45)" font-family="Liberation Sans" font-size="13" fill="#ddd">ab</text><path d="M781 174 L796 158.5 M790 158.5 H796.5 V165" fill="none" stroke="#4aa3e8" stroke-width="1.8"/><path d="M806.4 162.2 L810.4 166.2 L814.4 162.2" fill="none" stroke="#e0e0e0" stroke-width="1.5"/><text x="870.5" y="164" font-family="Liberation Sans" font-size="13.5" fill="#ddd">ab</text><text x="870.5" y="176" font-family="Liberation Sans" font-size="13.5" fill="#ddd">c</text><path d="M889.5 164.5 Q893 170 887 173.5 H881 M884.5 170 L881 173.5 L884.5 177" fill="none" stroke="#4aa3e8" stroke-width="1.8"/><path d="M653 202 H674.7 M653 208 H669 M653 214 H674.7 M653 219.8 H668.3 " stroke="#ddd" stroke-width="1.9"/><path d="M692 202 H714 M695.7 208 H710.3 M692 214 H714 M695.2 219.8 H710.8 " stroke="#ddd" stroke-width="1.9"/><path d="M731.3 202 H752.9 M736.9 208 H752.9 M731.3 214 H752.9 M737.5999999999999 219.8 H752.9 " stroke="#ddd" stroke-width="1.9"/><path d="M774.2 202 H796.0 M786.2 208 H796.0 M786.2 214 H796.0 M774.2 219.8 H796.0 " stroke="#ddd" stroke-width="1.9"/><path d="M785 211 H775.5 M779.5 207 L775.5 211 L779.5 215" fill="none" stroke="#4aa3e8" stroke-width="1.9"/><path d="M813 202 H835 M825 208 H835 M825 214 H835 M813 219.8 H835 " stroke="#ddd" stroke-width="1.9"/><path d="M813.5 211 H823 M819 207 L823 211 L819 215" fill="none" stroke="#4aa3e8" stroke-width="1.9"/><rect x="867.5" y="200.5" width="22" height="21.5" fill="none" stroke="#ddd" stroke-width="1.5"/><path d="M878.5 200.5 V205 M878.5 217.5 V222 M867.5 205 H889.5 M867.5 217.5 H889.5" stroke="#ddd" stroke-width="1.5"/><rect x="867.5" y="205" width="22" height="12.5" fill="none" stroke="#4aa3e8" stroke-width="1.6"/><path d="M871.5 211.2 H885.5 M874.5 208.2 L871.5 211.2 L874.5 214.2 M882.5 208.2 L885.5 211.2 L882.5 214.2" fill="none" stroke="#4aa3e8" stroke-width="1.6"/><path d="M1050 210.2 L1054 214.2 L1058 210.2" fill="none" stroke="#e0e0e0" stroke-width="1.5"/><path d="M1066.8 268.2 V257.8 H1077.2" fill="none" stroke="#ddd" stroke-width="1.5"/><path d="M1070 261 L1077 268 M1071.5 268 H1077 V262.5" fill="none" stroke="#ddd" stroke-width="1.5"/><path d="M1301 162.5 L1305 166.5 L1309 162.5" fill="none" stroke="#e0e0e0" stroke-width="1.5"/><path d="M1138.5 210.6 L1142.3 214.4 L1146.1 210.6" fill="none" stroke="#e0e0e0" stroke-width="1.5"/><path d="M1214.6 203 a5.3 5.3 0 0 1 5.2 6.5 Q1219 217 1210 221.6 L1209.2 220.2 Q1213 217 1213.5 213.3 a5.2 5.2 0 0 1 1.1 -10.3 Z" fill="#d8d8d8"/><text x="1256" y="211" font-family="Liberation Sans" font-size="13" fill="#ddd">0</text><text x="1248" y="223" font-family="Liberation Sans" font-size="13" fill="#ddd">.00</text><path d="M1255 204 H1246 M1249.5 200.5 L1246 204 L1249.5 207.5" fill="none" stroke="#4aa3e8" stroke-width="1.7"/><text x="1286" y="211" font-family="Liberation Sans" font-size="13" fill="#ddd">.00</text><text x="1296" y="223" font-family="Liberation Sans" font-size="13" fill="#ddd">0</text><path d="M1284 217 H1294.5 M1291 213.5 L1294.5 217 L1291 220.5" fill="none" stroke="#4aa3e8" stroke-width="1.7"/><path d="M1308.8 268.2 V257.8 H1319.2" fill="none" stroke="#ddd" stroke-width="1.5"/><path d="M1312 261 L1319 268 M1313.5 268 H1319 V262.5" fill="none" stroke="#ddd" stroke-width="1.5"/><rect x="1348.5" y="146.5" width="41.5" height="31.5" fill="none" stroke="#cfcfcf" stroke-width="1.6"/><path d="M1362.3333333333333 146.5 V178.0 M1376.1666666666667 146.5 V178.0 M1348.5 157.0 H1390.0 M1348.5 167.5 H1390.0 " stroke="#cfcfcf" stroke-width="1.6"/><rect x="1357" y="157" width="33" height="10" fill="#1e7fd8"/><path d="M1372 161.5 H1351 M1356.5 155 L1350.5 161.5 L1356.5 168" fill="none" stroke="#4aa3e8" stroke-width="1.8"/><path d="M1364.3 224.0 L1368.3 228.0 L1372.3 224.0" fill="none" stroke="#e0e0e0" stroke-width="1.5"/><rect x="1413.5" y="146.5" width="41.5" height="31.5" fill="none" stroke="#cfcfcf" stroke-width="1.6"/><path d="M1427.3333333333333 146.5 V178.0 M1441.1666666666667 146.5 V178.0 M1413.5 157.0 H1455.0 M1413.5 167.5 H1455.0 " stroke="#cfcfcf" stroke-width="1.6"/><rect x="1418" y="157" width="24" height="10" fill="#1e7fd8"/><path d="M1441 154.5 L1456.5 168.5 M1456.5 154.5 L1441 168.5" stroke="#e04040" stroke-width="1.8"/><path d="M1429.2 224.0 L1433.2 228.0 L1437.2 224.0" fill="none" stroke="#e0e0e0" stroke-width="1.5"/><rect x="1479.5" y="146.5" width="41" height="31.5" fill="none" stroke="#cfcfcf" stroke-width="1.6"/><path d="M1493.1666666666667 146.5 V178.0 M1506.8333333333333 146.5 V178.0 M1479.5 157.0 H1520.5 M1479.5 167.5 H1520.5 " stroke="#cfcfcf" stroke-width="1.6"/><rect x="1490" y="157" width="20" height="10" fill="#1e7fd8"/><path d="M1488 139.2 H1512 M1488 136.5 V142 M1512 136.5 V142" fill="none" stroke="#4aa3e8" stroke-width="1.6"/><path d="M1495.2 222.5 L1499.2 226.5 L1503.2 222.5" fill="none" stroke="#e0e0e0" stroke-width="1.5"/><path d="M1583.5 144 V141.8 H1566 L1574.5 152 L1566 162.3 H1583.5 V160" fill="none" stroke="#ddd" stroke-width="1.6"/><path d="M1695.5 150.7 L1699.5 154.7 L1703.5 150.7" fill="none" stroke="#e0e0e0" stroke-width="1.5"/><rect x="1563.5" y="181" width="23" height="20.3" fill="none" stroke="#ddd" stroke-width="1.6"/><path d="M1563.5 185.5 H1586.5" stroke="#ddd" stroke-width="1.4"/><path d="M1575 187 V197 M1571 193 L1575 197 L1579 193" fill="none" stroke="#4aa3e8" stroke-width="1.9"/><path d="M1620.2 188.0 L1624.2 192.0 L1628.2 188.0" fill="none" stroke="#e0e0e0" stroke-width="1.5"/><path d="M1563.5 229.5 L1574.5 218.8 L1586.5 230 L1575.5 240.8 Z" fill="none" stroke="#c455d8" stroke-width="1.8" stroke-linejoin="round"/><path d="M1563.5 229.5 L1569 224 L1581 235.5 L1575.5 240.8 Z" fill="#c455d8"/><path d="M1638.2 227.0 L1642.2 231.0 L1646.2 227.0" fill="none" stroke="#e0e0e0" stroke-width="1.5"/><path d="M1748 151.5 H1771.5 L1762.5 163 V175 H1757 V163 Z" fill="none" stroke="#ddd" stroke-width="1.7" stroke-linejoin="round"/><path d="M1768.4 222.7 L1772.2 226.5 L1776.0 222.7" fill="none" stroke="#e0e0e0" stroke-width="1.5"/><circle cx="1826.3" cy="156.8" r="15.4" fill="none" stroke="#ddd" stroke-width="1.7"/><path d="M1815.3 167.8 L1798.5 184.5" stroke="#ddd" stroke-width="1.8"/><path d="M1842.5 222.7 L1846.3 226.5 L1850.1 222.7" fill="none" stroke="#e0e0e0" stroke-width="1.5"/><rect x="1896" y="142.3" width="40" height="39.5" fill="none" stroke="#d4582a" stroke-width="3"/><rect x="1901.5" y="147.5" width="12.5" height="12.5" fill="none" stroke="#d4582a" stroke-width="2.2"/><rect x="1918" y="147.5" width="12.5" height="12.5" fill="none" stroke="#d4582a" stroke-width="2.2"/><rect x="1901.5" y="164" width="12.5" height="12.5" fill="none" stroke="#d4582a" stroke-width="2.2"/><rect x="1918" y="164" width="12.5" height="12.5" fill="none" stroke="#d4582a" stroke-width="2.2"/><rect x="1990" y="142" width="41" height="40.5" fill="none" stroke="#bbb" stroke-width="1.5"/><rect x="1990" y="142" width="41" height="3.5" fill="#aaa"/><path d="M1990 153 H2031 M1990 163 H2031 M1990 173 H2031 M2000 145 V182 M2010 145 V182 M2020 145 V182" stroke="#777" stroke-width="1"/><circle cx="2009.5" cy="160" r="12.5" fill="#2a2a2a" stroke="#ddd" stroke-width="1.7"/><path d="M2018.5 169 L2029.5 181.5" stroke="#ddd" stroke-width="2"/><rect x="2002.5" y="157" width="3.2" height="8" fill="#aaa"/><rect x="2006.8" y="152" width="3.2" height="13" fill="#ddd"/><rect x="2011" y="154" width="3.5" height="11" fill="#4aa3e8"/><circle cx="2212.7" cy="198.5" r="56" fill="#fff"/><rect x="2182" y="173.3" width="60.8" height="52.5" fill="#5b62e8"/><rect x="2190" y="181.2" width="19.3" height="16.2" fill="#fff"/><rect x="2216.4" y="181.2" width="18.6" height="16.2" fill="#fff"/><rect x="2190" y="203.4" width="19.3" height="14.4" fill="#fff"/><rect x="2216.4" y="203.4" width="18.6" height="14.4" fill="#fff"/><path d="M2850 254.0 L2857 261.0 L2864 254.0" fill="none" stroke="#ddd" stroke-width="1.8"/><path d="M50.5 1686 L45.5 1693 L50.5 1700" fill="none" stroke="#9a9a9a" stroke-width="1.5"/><path d="M98.5 1686 L103.5 1693 L98.5 1700" fill="none" stroke="#ddd" stroke-width="1.5"/><circle cx="2089.5" cy="1693" r="2" fill="#ddd"/><circle cx="2095.5" cy="1693" r="2" fill="#ddd"/><circle cx="2101.5" cy="1693" r="2" fill="#ddd"/><path d="M2143.5 1685 V1702 M2135 1693.5 H2152" stroke="#ddd" stroke-width="1.6"/><circle cx="2192" cy="1687" r="1.6" fill="#ddd"/><circle cx="2192" cy="1694" r="1.6" fill="#ddd"/><circle cx="2192" cy="1701" r="1.6" fill="#ddd"/><path d="M2234 1687.5 V1699 L2224 1693.2 Z" fill="#9a9a9a"/><path d="M2843 1687.5 V1699 L2853 1693.2 Z" fill="#9a9a9a"/><rect x="100" y="1726.8" width="20" height="16.4" fill="none" stroke="#f0f0f0" stroke-width="1.9"/><path d="M100 1730.4 H120" stroke="#f0f0f0" stroke-width="1.9"/><path d="M102.5 1732.6 H106.5 M102.5 1735.6 H106 M102.5 1738.6 H105.5" stroke="#f0f0f0" stroke-width="1.5"/><circle cx="113.9" cy="1738.6" r="7.2" fill="#141414"/><circle cx="113.9" cy="1738.6" r="6" fill="none" stroke="#f0f0f0" stroke-width="1.7"/><circle cx="113.9" cy="1738.6" r="3.2" fill="#f0f0f0"/><path d="M149 1730.5 Q155.4 1733 162 1730.5 M155.4 1732.5 L155 1737 L151.5 1743.5 M155 1737 L156.8 1740.5" fill="none" stroke="#f0f0f0" stroke-width="4.2" stroke-linecap="round" stroke-linejoin="round"/><path d="M149 1730.5 Q155.4 1733 162 1730.5 M155.4 1732.5 L155 1737 L151.5 1743.5 M155 1737 L156.8 1740.5" fill="none" stroke="#141414" stroke-width="1.3" stroke-linecap="round" stroke-linejoin="round"/><circle cx="155.4" cy="1727.6" r="3.6" fill="#f0f0f0"/><circle cx="155.4" cy="1727.6" r="1.5" fill="#141414"/><path d="M157.5 1736 L167 1745.5 M167 1736 L157.5 1745.5" stroke="#141414" stroke-width="3.6"/><path d="M157.5 1736 L167 1745.5 M167 1736 L157.5 1745.5" stroke="#f0f0f0" stroke-width="1.5"/><rect x="2464.5" y="1725" width="19" height="18.5" fill="none" stroke="#e6e6e6" stroke-width="1.6"/><path d="M2470.8 1725 V1743.5 M2477.2 1725 V1743.5 M2464.5 1731.2 H2483.5 M2464.5 1737.4 H2483.5" stroke="#e6e6e6" stroke-width="1.4"/><rect x="2524" y="1725" width="21" height="18.5" fill="none" stroke="#e6e6e6" stroke-width="1.6"/><rect x="2528" y="1728.5" width="13" height="11.5" fill="none" stroke="#e6e6e6" stroke-width="1.4"/><path d="M2530.5 1732 H2538.5 M2530.5 1735 H2538.5" stroke="#e6e6e6" stroke-width="1.2"/><path d="M2583.8 1743.5 V1725 H2605 V1743.5 Z M2583.8 1736.5 H2594.5 V1725 M2598.5 1725 V1733" fill="none" stroke="#e6e6e6" stroke-width="1.6"/><path d="M2633 1735 H2644.5" stroke="#ddd" stroke-width="1.4"/><path d="M2653 1735 H2801" stroke="#bbb" stroke-width="1.2"/><path d="M2727.6 1731 V1739" stroke="#bbb" stroke-width="1.2"/><path d="M2807.7 1735 H2820.3 M2814 1728.7 V1741.3" stroke="#ddd" stroke-width="1.4"/><path d="M2876 286 L2883 295.8 H2869 Z" fill="#9a9a9a" stroke="#9a9a9a" stroke-width="1" stroke-linejoin="round"/><path d="M2876 1663.7 L2883 1654 H2869 Z" fill="#9a9a9a" stroke="#9a9a9a" stroke-width="1" stroke-linejoin="round"/></svg>
</body></html>
